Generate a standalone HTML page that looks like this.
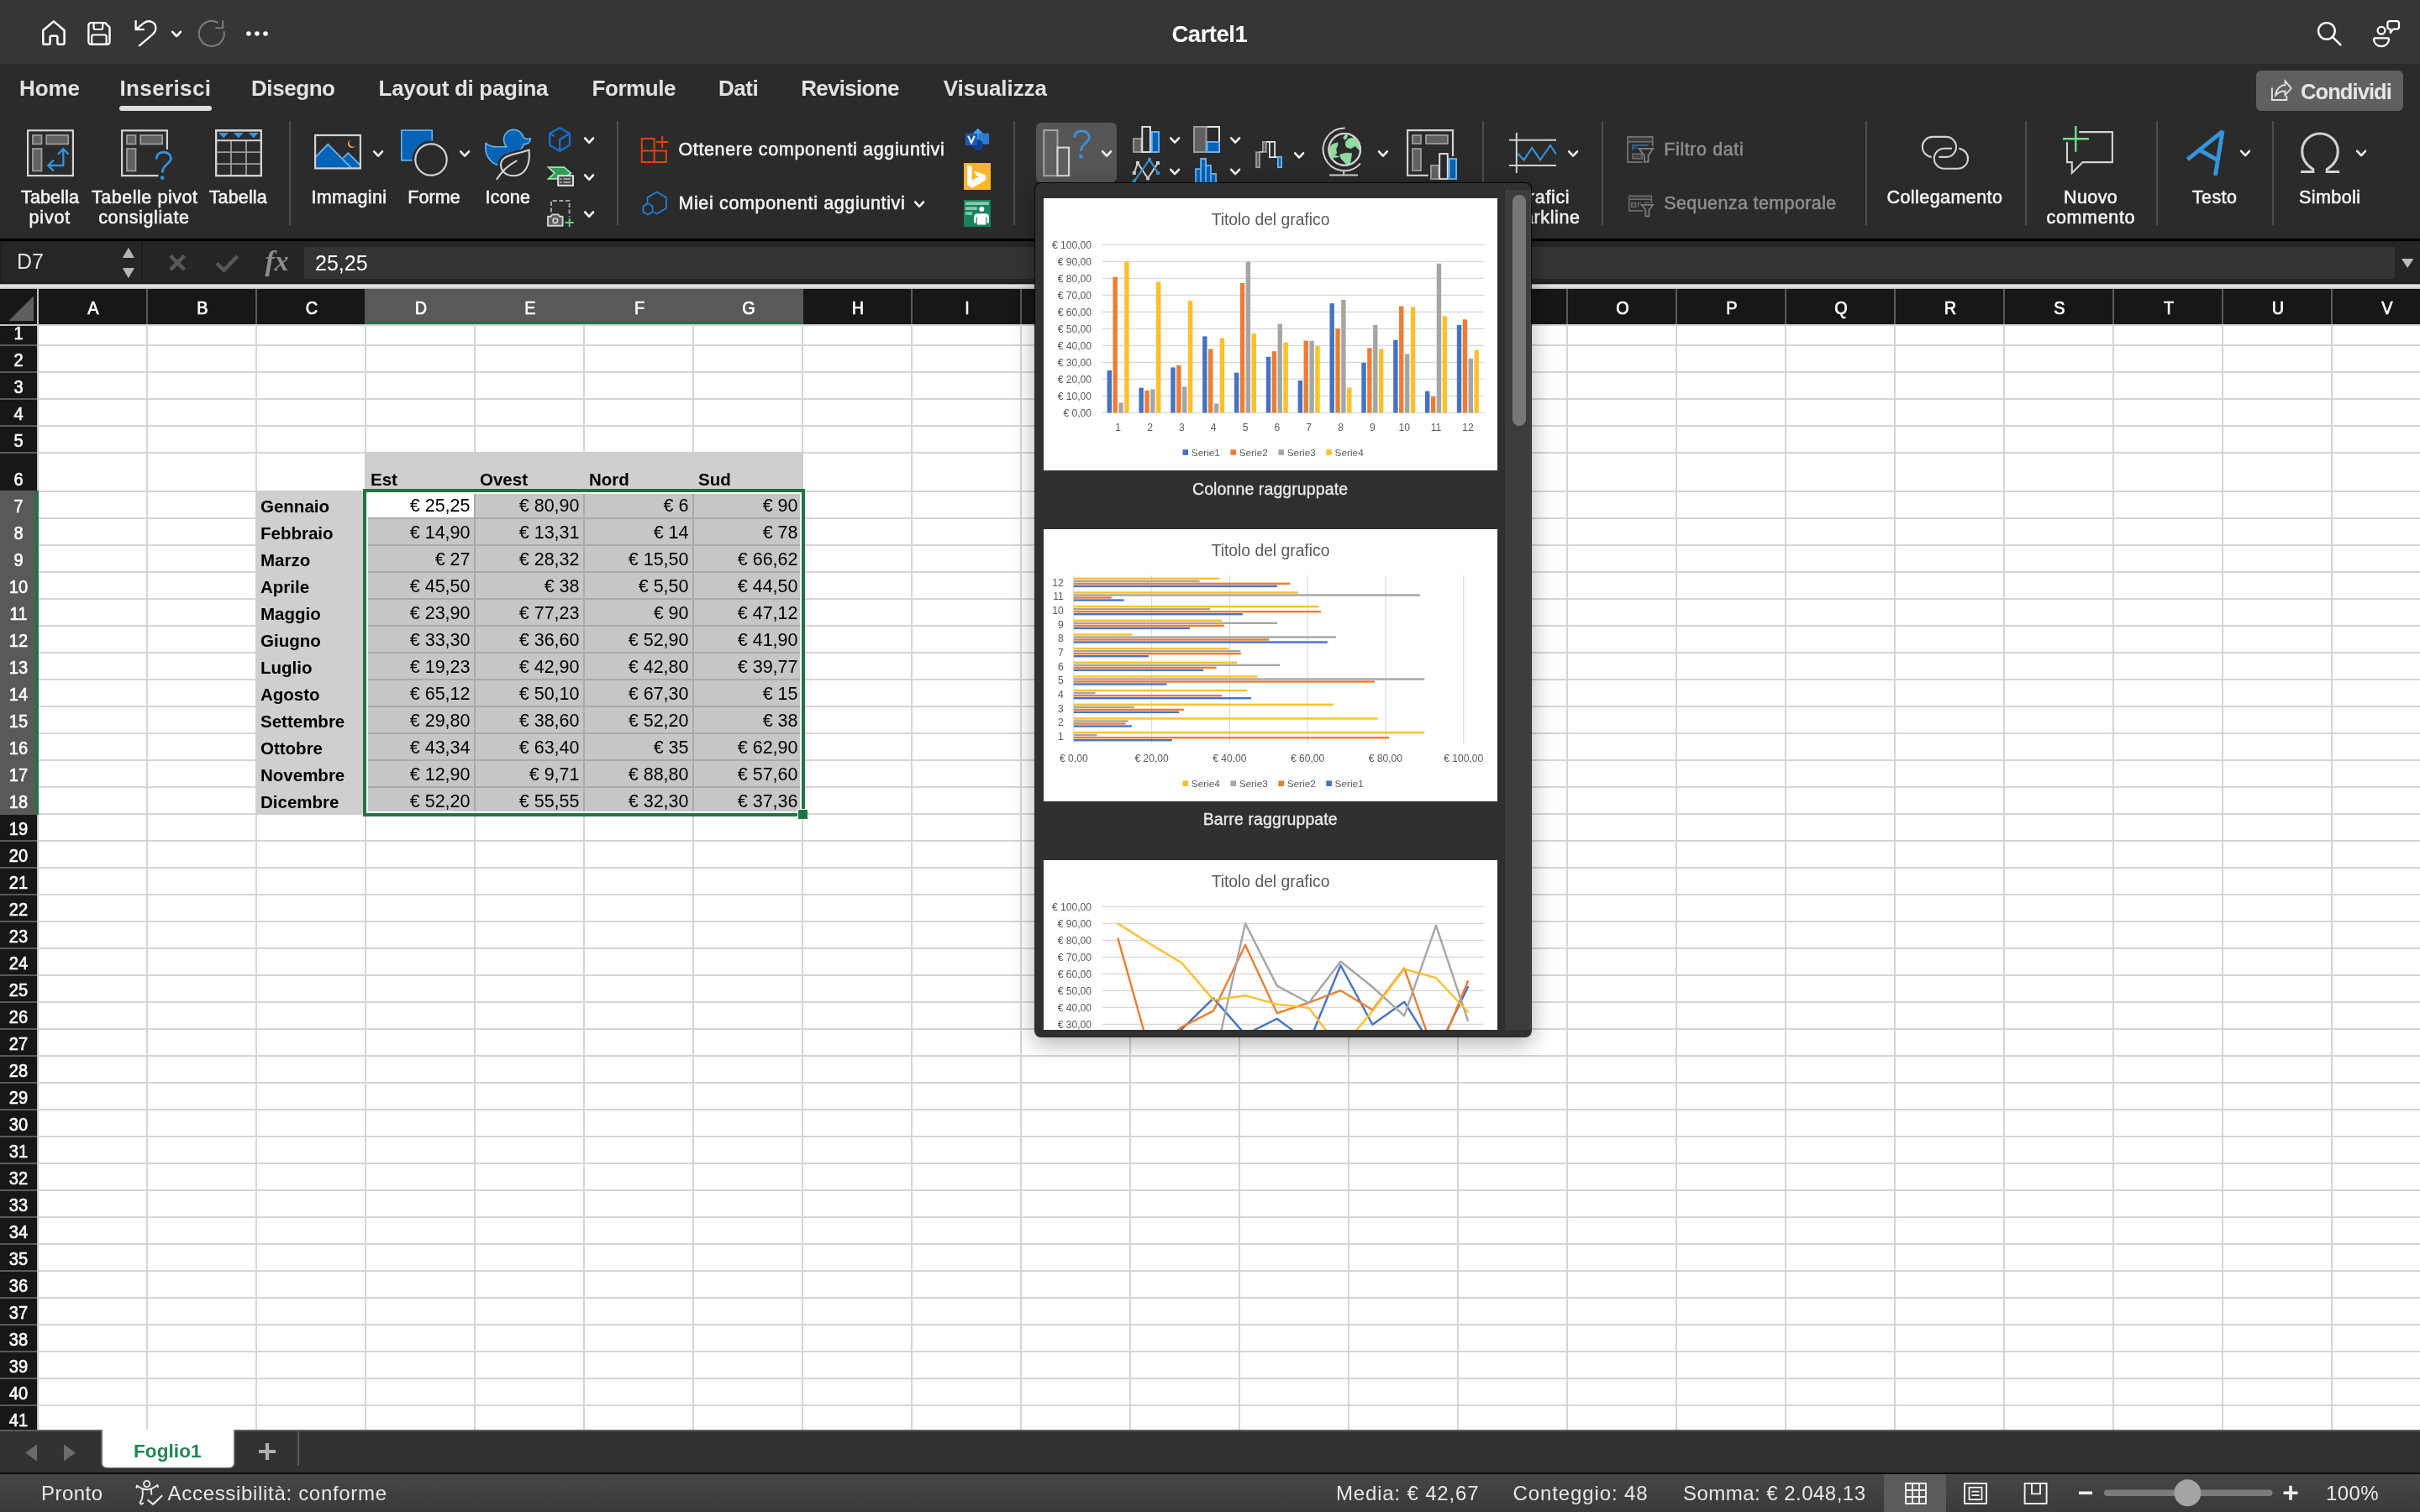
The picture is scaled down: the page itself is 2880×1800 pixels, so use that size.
<!DOCTYPE html>
<html><head><meta charset="utf-8"><title>Cartel1</title>
<style>
html,body{margin:0;padding:0;overflow:hidden;}
html{width:2880px;height:1800px;}
body{width:2880px;height:1800px;overflow:hidden;background:#fff;font-family:"Liberation Sans",sans-serif;position:relative;}
div{box-sizing:border-box;}
svg{position:absolute;overflow:visible;}
</style></head><body><div style="position:absolute;left:0;top:0;width:2880px;height:1800px;overflow:hidden;will-change:transform;">

<div style="position:absolute;left:0px;top:0px;width:2880px;height:76px;background:#363636;"></div>
<div style="position:absolute;left:0px;top:76px;width:2880px;height:208px;background:#2b2b2b;"></div>
<div style="position:absolute;left:0px;top:284px;width:2880px;height:3px;background:#000;"></div>
<div style="position:absolute;left:0px;top:287px;width:2880px;height:51px;background:#1e1e1e;"></div>
<div style="position:absolute;left:0px;top:338px;width:2880px;height:6px;background:linear-gradient(#8c8c8c 0,#ececec 30%,#e4e4e4 55%,#b4b4b4 100%);"></div>
<svg style="left:0;top:0" width="2880" height="76" viewBox="0 0 2880 76"><path d="M51.2 36.3 L63.9 25.4 L76.6 36.3 V51.4 a1.4 1.4 0 0 1 -1.4 1.4 h-5.6 a1.2 1.2 0 0 1 -1.2 -1.2 V44.6 a1.8 1.8 0 0 0 -1.8 -1.8 h-5.2 a1.8 1.8 0 0 0 -1.8 1.8 V51.6 a1.2 1.2 0 0 1 -1.2 1.2 h-5.6 a1.4 1.4 0 0 1 -1.4 -1.4 Z" fill="none" stroke="#fff" stroke-width="2.5" stroke-linejoin="round"/><path d="M108.4 27.1 H125 L130.5 32.6 V49.8 a3 3 0 0 1 -3 3 H108.4 a3 3 0 0 1 -3 -3 V30.1 a3 3 0 0 1 3 -3 Z" fill="none" stroke="#fff" stroke-width="2.4" stroke-linejoin="round"/><path d="M111.5 27.1 V33 a2 2 0 0 0 2 2 h6.7 a2 2 0 0 0 2 -2 V27.1" fill="none" stroke="#fff" stroke-width="2.2"/><path d="M109.2 52.8 V43.5 a2 2 0 0 1 2 -2 h13.4 a2 2 0 0 1 2 2 V52.8" fill="none" stroke="#fff" stroke-width="2.2"/><path d="M161.6 24.3 V35.2 H171.8" fill="none" stroke="#fff" stroke-width="2.3"/><path d="M162 34.8 L171.5 27.2 C177.5 22.8 185.3 26.5 185.3 33.5 C185.3 36.8 183.8 39.2 181.2 41.3 L165.3 54.8" fill="none" stroke="#fff" stroke-width="2.3" stroke-linejoin="round"/><polyline points="205.2,37.8 210.1,43.099999999999994 215,37.8" fill="none" stroke="#fff" stroke-width="2.6" stroke-linecap="round" stroke-linejoin="round"/><path d="M266.6 37.5 A15 15 0 1 1 259.5 27.1" fill="none" stroke="#7b7b7b" stroke-width="2.1"/><path d="M265.2 24.3 V33.2 H256.3" fill="none" stroke="#7b7b7b" stroke-width="2.1"/><circle cx="295.9" cy="40" r="2.8" fill="#fff"/><circle cx="305.9" cy="40" r="2.8" fill="#fff"/><circle cx="316" cy="40" r="2.8" fill="#fff"/><circle cx="2768.9" cy="36.9" r="9.8" fill="none" stroke="#fff" stroke-width="2.4"/><path d="M2776.3 44.3 L2785.5 53.4" stroke="#fff" stroke-width="2.4" stroke-linecap="round"/><circle cx="2834" cy="36.3" r="4.4" fill="none" stroke="#fff" stroke-width="2.3"/><path d="M2826.5 45.3 H2841.5 a1.5 1.5 0 0 1 1.5 1.5 A9 8.4 0 0 1 2825 46.8 a1.5 1.5 0 0 1 1.5 -1.5 Z" fill="none" stroke="#fff" stroke-width="2.3"/><path d="M2844 25.1 H2852.4 a2.6 2.6 0 0 1 2.6 2.6 V32 a2.6 2.6 0 0 1 -2.6 2.6 H2848.2 L2844.8 39 V34.6 H2844 a2.6 2.6 0 0 1 -2.6 -2.6 V27.7 a2.6 2.6 0 0 1 2.6 -2.6 Z" fill="none" stroke="#fff" stroke-width="2.2" stroke-linejoin="round"/></svg>
<div style="position:absolute;top:22.87px;height:36px;line-height:36px;font-size:27.5px;color:#fff;white-space:nowrap;font-weight:bold;left:1394.5px;letter-spacing:-0.507px;">Cartel1</div>
<div style="position:absolute;top:87.99px;height:34px;line-height:34px;font-size:26px;color:#e2e2e2;white-space:nowrap;font-weight:bold;left:23px;letter-spacing:-0.079px;">Home</div>
<div style="position:absolute;top:87.99px;height:34px;line-height:34px;font-size:26px;color:#e2e2e2;white-space:nowrap;font-weight:bold;left:142.5px;letter-spacing:0.374px;">Inserisci</div>
<div style="position:absolute;top:87.99px;height:34px;line-height:34px;font-size:26px;color:#e2e2e2;white-space:nowrap;font-weight:bold;left:299px;letter-spacing:-0.428px;">Disegno</div>
<div style="position:absolute;top:87.99px;height:34px;line-height:34px;font-size:26px;color:#e2e2e2;white-space:nowrap;font-weight:bold;left:450.6px;letter-spacing:-0.305px;">Layout di pagina</div>
<div style="position:absolute;top:87.99px;height:34px;line-height:34px;font-size:26px;color:#e2e2e2;white-space:nowrap;font-weight:bold;left:704.5px;letter-spacing:-0.428px;">Formule</div>
<div style="position:absolute;top:87.99px;height:34px;line-height:34px;font-size:26px;color:#e2e2e2;white-space:nowrap;font-weight:bold;left:855px;letter-spacing:-0.473px;">Dati</div>
<div style="position:absolute;top:87.99px;height:34px;line-height:34px;font-size:26px;color:#e2e2e2;white-space:nowrap;font-weight:bold;left:953.2px;letter-spacing:-0.704px;">Revisione</div>
<div style="position:absolute;top:87.99px;height:34px;line-height:34px;font-size:26px;color:#e2e2e2;white-space:nowrap;font-weight:bold;left:1122.8px;letter-spacing:-0.067px;">Visualizza</div>
<div style="position:absolute;left:142px;top:126px;width:110px;height:6px;background:#dedede;border-radius:3px;"></div>
<div style="position:absolute;left:2685px;top:84px;width:175px;height:48px;background:#606060;border-radius:6px;"></div>
<div style="position:absolute;top:92.66px;height:33px;line-height:33px;font-size:25.5px;color:#e6e6e6;white-space:nowrap;font-weight:bold;left:2738px;letter-spacing:-0.920px;">Condividi</div>
<svg style="left:0;top:0" width="2880" height="284" viewBox="0 0 2880 284"><path d="M2703.9 104.6 V119 H2721.3 V114.2" fill="none" stroke="#e2e2e2" stroke-width="1.9"/><path d="M2708.2 113.3 C2708.6 106.4 2713.4 101.6 2719.5 101.2 V96.4 L2726.8 105.1 L2719.5 113.3 V108.5 C2714.3 108.5 2710.8 110.3 2708.2 113.3 Z" fill="none" stroke="#e2e2e2" stroke-width="1.8" stroke-linejoin="miter"/><rect x="33.1" y="155.3" width="53.8" height="53.8" fill="none" stroke="#d2d2d2" stroke-width="2.2"/><rect x="39" y="161" width="10.5" height="10.5" fill="#616161" stroke="#9c9c9c" stroke-width="1.8"/><rect x="55.2" y="161" width="26" height="10.5" fill="#616161" stroke="#9c9c9c" stroke-width="1.8"/><rect x="39" y="177" width="10.5" height="26.5" fill="#616161" stroke="#9c9c9c" stroke-width="1.8"/><path d="M75.3 197 V177.6 M68.9 183.8 L75.3 177.2 L81.7 183.8 M76.4 197 H57.4 M63.8 190.6 L57.2 197 L63.8 203.4" fill="none" stroke="#3595de" stroke-width="2.3"/><path d="M188.5 209.1 H145.1 V155.3 H198.9 V178" fill="none" stroke="#d2d2d2" stroke-width="2.2"/><rect x="151" y="161" width="10.5" height="10.5" fill="#616161" stroke="#9c9c9c" stroke-width="1.8"/><rect x="167.2" y="161" width="26" height="10.5" fill="#616161" stroke="#9c9c9c" stroke-width="1.8"/><rect x="151" y="177" width="10.5" height="26.5" fill="#616161" stroke="#9c9c9c" stroke-width="1.8"/><path d="M186.2 189.5 C186.2 184 190 181.2 194.8 181.2 C199.8 181.2 203.4 184.3 203.4 188.6 C203.4 195 193.2 196.2 193.2 205.5" fill="none" stroke="#3595de" stroke-width="2.7"/><rect x="191.2" y="209.6" width="4.1" height="4.1" fill="#3595de"/><rect x="257.1" y="155.3" width="53.8" height="53.8" fill="none" stroke="#d2d2d2" stroke-width="2.2"/><path d="M257 181.2 H311 M257 195.2 H311 M275 167.2 V209 M293 167.2 V209" stroke="#9c9c9c" stroke-width="1.8" fill="none"/><path d="M257 167.2 H311" stroke="#d2d2d2" stroke-width="2" fill="none"/><path d="M259.9 157.9 H272.1 L266 164.3 Z" fill="#3595de"/><path d="M277.79999999999995 157.9 H290.0 L283.9 164.3 Z" fill="#3595de"/><path d="M295.7 157.9 H307.90000000000003 L301.8 164.3 Z" fill="#3595de"/><rect x="257.1" y="155.3" width="53.8" height="53.8" fill="none" stroke="#d2d2d2" stroke-width="2.2"/><path d="M375.5 186.6 L390.3 171.6 L408.6 190 L414.3 181.9 L428.5 196 V200.3 H375.5 Z" fill="#0763b6"/><path d="M375.5 186.8 L390.3 171.8 L418.5 200.3 M408.3 188.2 L414.3 182.2 L428.8 196.7" fill="none" stroke="#6ab4f0" stroke-width="1.8"/><path d="M417.2 166.4 A5 5 0 1 0 423.2 173.6 A4.6 4.6 0 0 1 417.2 166.4 Z" fill="#f2a85b"/><rect x="375.1" y="161" width="53.8" height="39.4" fill="none" stroke="#d2d2d2" stroke-width="2.2"/><polyline points="445.2,180.3 450.1,185.60000000000002 455,180.3" fill="none" stroke="#f0f0f0" stroke-width="2.6" stroke-linecap="round" stroke-linejoin="round"/><rect x="477.8" y="155.1" width="36.4" height="35.8" fill="#0763b6" stroke="#6ab4f0" stroke-width="1.6"/><circle cx="513" cy="190" r="22.5" fill="#2b2b2b"/><circle cx="513" cy="190" r="18.7" fill="none" stroke="#d2d2d2" stroke-width="2.2"/><polyline points="548.2,180.3 553.1,185.60000000000002 558,180.3" fill="none" stroke="#f0f0f0" stroke-width="2.6" stroke-linecap="round" stroke-linejoin="round"/><path d="M578 170.3 C582 174 587 174.8 592 174.8 H603 C600.5 172.3 599.6 169 599.6 166 C599.6 159.6 604.7 154.4 611.3 154.4 C617 154.4 621.8 158.3 622.8 163.6 C625.5 165.6 629 165.8 631.5 164.6 C631.5 169.5 627.5 171.8 623.3 171.6 C623 173 622.2 175 620.5 176.8 L600 196.8 C587 198.5 576 188 578 170.3 Z" fill="#0763b6" stroke="#6ab4f0" stroke-width="1.6" stroke-linejoin="round"/><path d="M629.6 178.6 C631.5 196 625 209.2 611 209.2 C602 209.2 596 203.5 596 196 C596 184.5 612 184.5 629.6 178.6 Z" fill="#2b2b2b" stroke="#2b2b2b" stroke-width="7" stroke-linejoin="round"/><path d="M629.6 178.6 C631.5 196 625 209.2 611 209.2 C602 209.2 596 203.5 596 196 C596 184.5 612 184.5 629.6 178.6 Z" fill="none" stroke="#d2d2d2" stroke-width="2.1" stroke-linejoin="round"/><path d="M591.3 213.2 C597 204.5 604 197 614.5 191.6" fill="none" stroke="#d2d2d2" stroke-width="2.1" stroke-linecap="round"/><path d="M666.2 152.2 L678 159 V172.8 L666.2 179.8 L654.2 172.8 V159 Z M666.2 179.8 V166 L678 159 M654.2 159 L659.5 162" fill="none" stroke="#1272cf" stroke-width="2.3" stroke-linejoin="round"/><polyline points="696.2,164.5 701.1,169.8 706,164.5" fill="none" stroke="#f0f0f0" stroke-width="2.6" stroke-linecap="round" stroke-linejoin="round"/><path d="M652.6 199.2 H671.4 L679.4 206 L671.4 212.9 H652.6 L660 206 Z" fill="#2f9e50" stroke="#a2e2b2" stroke-width="1.7" stroke-linejoin="miter"/><rect x="664.2" y="209.2" width="17.8" height="11.6" fill="#444" stroke="#e0e0e0" stroke-width="2"/><path d="M670.5 213 H679 M670.5 217 H679" stroke="#bdbdbd" stroke-width="1.6"/><rect x="666.6" y="212.2" width="1.8" height="1.8" fill="#bdbdbd"/><rect x="666.6" y="216.2" width="1.8" height="1.8" fill="#bdbdbd"/><polyline points="696.2,208.5 701.1,213.8 706,208.5" fill="none" stroke="#f0f0f0" stroke-width="2.6" stroke-linecap="round" stroke-linejoin="round"/><path d="M656 252.5 V239 H677.6 V258" fill="none" stroke="#a4a4a4" stroke-width="2" stroke-dasharray="5 2.6"/><path d="M652 257.8 H655.6 L657 255.4 H664.6 L666 257.8 H669.6 V268.7 H652 Z" fill="#5c5c5c" stroke="#d2d2d2" stroke-width="1.9" stroke-linejoin="round"/><circle cx="660.8" cy="262.8" r="2.8" fill="none" stroke="#d2d2d2" stroke-width="1.7"/><path d="M677.7 260 V270 M672.7 265 H682.7" stroke="#5fd67b" stroke-width="1.9"/><polyline points="696.2,252.5 701.1,257.8 706,252.5" fill="none" stroke="#f0f0f0" stroke-width="2.6" stroke-linecap="round" stroke-linejoin="round"/><path d="M763.8 164.9 H778.6 V193 H763.8 Z M763.8 179.5 H792.8 V193 H778.6" fill="none" stroke="#e2430d" stroke-width="2"/><path d="M788.2 161.8 V176 M781 169 H795.2" stroke="#e2430d" stroke-width="2"/><path d="M770.5 243 V235 L781.7 228.6 L792.8 235 V248 L781.7 254.4 L778.2 252.4" fill="none" stroke="#1f83dc" stroke-width="1.7" stroke-linejoin="round"/><path d="M771 242.3 L776.6 245.6 V252.2 L771 255.5 L765.4 252.2 V245.6 Z" fill="none" stroke="#1f83dc" stroke-width="1.7" stroke-linejoin="round"/><polyline points="1089.2,240.5 1094.1,245.8 1099,240.5" fill="none" stroke="#f0f0f0" stroke-width="2.6" stroke-linecap="round" stroke-linejoin="round"/><path d="M1163.8 152.8 L1171 160 L1163.8 167.2 L1156.6 160 Z" fill="#41a5ee"/><rect x="1164.6" y="158.8" width="12.5" height="12.9" fill="#2b7cd3"/><circle cx="1163.6" cy="172.5" r="6.4" fill="#103f91"/><rect x="1148.9" y="158.9" width="14.2" height="14.1" fill="#185abd"/><path d="M1152.2 161.8 L1156 170 L1159.8 161.8" fill="none" stroke="#fff" stroke-width="2"/><rect x="1147" y="194" width="32" height="32" fill="#fdb52b"/><path d="M1151 196.2 L1156.6 198.2 V214.8 L1165 210.2 L1161.4 208.4 L1159.4 203.4 L1173 208.2 V214.6 L1157 223.7 L1151 220.3 Z" fill="#fff"/><rect x="1147" y="238" width="32" height="32" fill="#15845a"/><path d="M1148.9 242.1 H1176.9 M1148.9 248.1 H1162.7 M1148.9 254 H1157.1" stroke="#8cc7a8" stroke-width="3.6"/><circle cx="1168.3" cy="248.9" r="3" fill="#fff"/><path d="M1159.2 258.2 a4 4 0 0 1 4 -4 h9.7 a4 4 0 0 1 4 4 V265.5 h-2.4 v-7 h-1.2 V267.5 h-10.5 V258.5 h-1.2 V265.5 h-2.4 Z" fill="#fff"/><rect x="1233" y="146" width="96" height="71" rx="6" fill="#565656"/><rect x="1242.3" y="155.1" width="16.2" height="54.1" fill="#5f5f5f" stroke="#a8a8a8" stroke-width="2"/><rect x="1258.5" y="175.6" width="13.6" height="33.6" fill="#5f5f5f" stroke="#dcdcdc" stroke-width="2"/><path d="M1278.8 164 C1278.8 158.6 1282.8 155.8 1287.5 155.8 C1292.6 155.8 1296.4 158.9 1296.4 163.4 C1296.4 169.8 1286.2 171 1286.2 180" fill="none" stroke="#3595de" stroke-width="2.7"/><rect x="1284.2" y="184" width="4.1" height="4.1" fill="#3595de"/><polyline points="1312.2,180.3 1317.1,185.60000000000002 1322,180.3" fill="none" stroke="#f0f0f0" stroke-width="2.6" stroke-linecap="round" stroke-linejoin="round"/><rect x="1349" y="165.1" width="9.3" height="15.9" fill="#616161" stroke="#9c9c9c" stroke-width="1.9"/><rect x="1359.3" y="151" width="9.6" height="30" fill="#2b2b2b" stroke="#e4e4e4" stroke-width="1.9"/><rect x="1370.8" y="157" width="8.3" height="24" fill="#0763b6" stroke="#6ab4f0" stroke-width="1.9"/><polyline points="1393.2,164.3 1398.1,169.60000000000002 1403,164.3" fill="none" stroke="#f0f0f0" stroke-width="2.6" stroke-linecap="round" stroke-linejoin="round"/><path d="M1349.8 206 L1354 194 L1366 212.4 L1378 194" fill="none" stroke="#d2d2d2" stroke-width="2"/><rect x="1347.8" y="204" width="4" height="4" fill="#d2d2d2"/><rect x="1352" y="192" width="4" height="4" fill="#d2d2d2"/><rect x="1364" y="210.4" width="4" height="4" fill="#d2d2d2"/><rect x="1376" y="192" width="4" height="4" fill="#d2d2d2"/><path d="M1349.8 215.8 L1368 190 L1378 206" fill="none" stroke="#3595de" stroke-width="2"/><rect x="1347.8" y="213.6" width="4" height="4" fill="#3595de"/><rect x="1366" y="188" width="4" height="4" fill="#3595de"/><rect x="1376" y="204" width="4" height="4" fill="#3595de"/><polyline points="1393.2,201.8 1398.1,207.10000000000002 1403,201.8" fill="none" stroke="#f0f0f0" stroke-width="2.6" stroke-linecap="round" stroke-linejoin="round"/><rect x="1421" y="151" width="30" height="30" fill="#2b2b2b" stroke="#e4e4e4" stroke-width="2"/><rect x="1421" y="151" width="14.5" height="30" fill="#616161" stroke="#9c9c9c" stroke-width="2"/><rect x="1436.5" y="169" width="14.5" height="12" fill="#0763b6" stroke="#6ab4f0" stroke-width="1.9"/><polyline points="1465.2,164.3 1470.1,169.60000000000002 1475,164.3" fill="none" stroke="#f0f0f0" stroke-width="2.6" stroke-linecap="round" stroke-linejoin="round"/><path d="M1423.1 218 V201.1 H1429.1 V189 H1435.1 V196.9 H1441 V206.9 H1447.1 V218 Z" fill="#0763b6"/><path d="M1423.1 218 V201.1 H1429.1 M1429.1 218 V189 H1435.1 V218 M1435.1 196.9 H1441 V218 M1441 206.9 H1447.1 V218" fill="none" stroke="#6ab4f0" stroke-width="1.8"/><polyline points="1465.2,201.8 1470.1,207.10000000000002 1475,201.8" fill="none" stroke="#f0f0f0" stroke-width="2.6" stroke-linecap="round" stroke-linejoin="round"/><rect x="1495" y="181.2" width="4" height="18" fill="#616161" stroke="#9c9c9c" stroke-width="1.8"/><rect x="1502.9" y="168.9" width="4" height="12" fill="#616161" stroke="#9c9c9c" stroke-width="1.8"/><path d="M1499 180.9 H1503" stroke="#d2d2d2" stroke-width="1.6"/><rect x="1510.9" y="168.9" width="6.2" height="18.3" fill="#2b2b2b" stroke="#e4e4e4" stroke-width="1.8"/><path d="M1507 168.9 H1511 M1517 187.2 H1521" stroke="#e4e4e4" stroke-width="1.8"/><rect x="1520.9" y="186.8" width="4.2" height="12.4" fill="#0763b6" stroke="#6ab4f0" stroke-width="1.8"/><polyline points="1541.2,182.3 1546.1,187.60000000000002 1551,182.3" fill="none" stroke="#f0f0f0" stroke-width="2.6" stroke-linecap="round" stroke-linejoin="round"/><circle cx="1600.2" cy="177.9" r="18.8" fill="#2b2b2b" stroke="#d2d2d2" stroke-width="2"/><path d="M1582.3 175.2 L1585.8 171.7 L1591.7 169.8 L1592.2 171.7 L1589.8 177.7 L1590.7 182.6 L1587.8 184.6 L1593.7 186.6 L1585.8 188.1 L1582.8 183.6 Z M1598.7 163.8 L1601.7 159.8 L1603.6 161.3 L1602.6 164.8 L1600.2 166.3 Z M1601.7 168.8 L1604.6 165.3 L1611.6 163.8 L1616.5 168.8 L1618.7 174.7 L1618.3 179.2 L1612.6 173.7 L1607.6 176.7 L1602.6 175.2 L1601.2 171.7 Z M1594.7 184.1 L1601.7 182.2 L1608.6 182.6 L1607.6 189.6 L1606.6 195 L1602.6 196 L1599.7 192.6 L1595.7 188.6 Z" fill="#8fdba0" stroke="#8fdba0" stroke-width="0.8" stroke-linejoin="round"/><circle cx="1600.2" cy="177.9" r="18.8" fill="none" stroke="#d2d2d2" stroke-width="2"/><path d="M1600.6 152.6 A25.3 25.3 0 1 0 1619 194.6" fill="none" stroke="#d2d2d2" stroke-width="2" /><path d="M1599.2 203.2 V208.4 M1582 208.4 H1616" stroke="#d2d2d2" stroke-width="2"/><polyline points="1641.0,180.3 1645.8999999999999,185.60000000000002 1650.8,180.3" fill="none" stroke="#f0f0f0" stroke-width="2.6" stroke-linecap="round" stroke-linejoin="round"/><path d="M1699.8 208.8 H1675.1 V155.2 H1729 V186.1" fill="none" stroke="#d2d2d2" stroke-width="2.2"/><rect x="1681" y="161" width="10" height="10" fill="#616161" stroke="#9c9c9c" stroke-width="1.8"/><rect x="1697" y="161" width="25.9" height="10" fill="#616161" stroke="#9c9c9c" stroke-width="1.8"/><rect x="1681" y="177.1" width="10" height="26" fill="#616161" stroke="#9c9c9c" stroke-width="1.8"/><rect x="1703" y="197" width="9.2" height="16" fill="#616161" stroke="#9c9c9c" stroke-width="1.9"/><rect x="1713.2" y="183.1" width="9.6" height="29.9" fill="#2b2b2b" stroke="#e4e4e4" stroke-width="1.9"/><rect x="1724.7" y="189.1" width="8.4" height="23.9" fill="#0763b6" stroke="#6ab4f0" stroke-width="1.9"/><path d="M1804.8 158 V206 M1796 166.8 H1852 M1796 197 H1852" stroke="#d2d2d2" stroke-width="2" fill="none"/><path d="M1806 182.5 L1813.5 190.5 L1823.2 175.8 L1833 190.5 L1845 173 L1852 183.5" fill="none" stroke="#3595de" stroke-width="2.1"/><polyline points="1867.2,180.3 1872.1,185.60000000000002 1877,180.3" fill="none" stroke="#f0f0f0" stroke-width="2.6" stroke-linecap="round" stroke-linejoin="round"/><path d="M1954.5 192.9 H1937.2 V163.1 H1966.7 V174" fill="none" stroke="#6e6e6e" stroke-width="2"/><rect x="1938.2" y="164.4" width="27.5" height="3.4" fill="#3e3e3e"/><path d="M1937.2 168.8 H1966.7" stroke="#6e6e6e" stroke-width="1.8"/><path d="M1943.1 178.6 V172.9 H1961.8" fill="none" stroke="#3d6b99" stroke-width="1.7"/><rect x="1944" y="173.8" width="4.6" height="4" fill="#1f4a72"/><rect x="1943.1" y="183.2" width="11" height="5.6" fill="#414141" stroke="#6e6e6e" stroke-width="1.6"/><path d="M1950.4 177 H1967.2 L1961.6 185 V192.8 H1957 V185 Z" fill="#2b2b2b" stroke="#7c7c7c" stroke-width="1.9" stroke-linejoin="miter"/><path d="M1955 250.9 H1938.9 V233.4 H1965.3 V242" fill="none" stroke="#6e6e6e" stroke-width="1.6"/><rect x="1939.7" y="234.4" width="24.8" height="2.2" fill="#3e3e3e"/><path d="M1938.9 237.4 H1965.3" stroke="#6e6e6e" stroke-width="1.5"/><rect x="1941.5" y="241.6" width="5.2" height="5" fill="#444" stroke="#6e6e6e" stroke-width="1.3"/><path d="M1949.6 246.6 V241.6 H1953.2 M1957 241.2 H1963" fill="none" stroke="#6e6e6e" stroke-width="1.3"/><path d="M1953.6 243.8 H1967.2 L1962.4 249.8 V257.4 H1958.4 V249.8 Z" fill="#2b2b2b" stroke="#7c7c7c" stroke-width="1.7" stroke-linejoin="miter"/><path d="M2298.75 186.85 A12 12 0 0 1 2299.8 162.9 H2316 A12 12 0 0 1 2316 186.9 H2307.4" fill="none" stroke="#d2d2d2" stroke-width="2.1"/><path d="M2323 176.8 H2313.8 A12 12 0 0 0 2313.8 200.8 H2330 A12 12 0 0 0 2331.3 176.87" fill="none" stroke="#d2d2d2" stroke-width="2.1"/><path d="M2474.2 157.1 H2513.9 V193.1 H2478.6 L2465.8 206 V193.1 H2460 V169.2" fill="none" stroke="#d2d2d2" stroke-width="2.1"/><path d="M2470.3 150 V180.7 M2454.9 165.3 H2485.9" stroke="#6fe28b" stroke-width="2.4"/><path d="M2603.4 189.8 L2645 156.4 L2636.4 208.8 M2618.5 179 L2637.8 189.8" fill="none" stroke="#3595de" stroke-width="4.9" stroke-linejoin="bevel"/><polyline points="2667.2,179.8 2672.1,185.10000000000002 2677,179.8" fill="none" stroke="#f0f0f0" stroke-width="2.6" stroke-linecap="round" stroke-linejoin="round"/><path d="M2738 204.4 H2752.8 V201.6 C2744.2 196 2739.7 188.6 2739.7 180.2 A21.3 21.3 0 0 1 2782.3 180.2 C2782.3 188.6 2777.8 196 2769.2 201.6 V204.4 H2784.1" fill="none" stroke="#d2d2d2" stroke-width="3"/><polyline points="2805.2,179.8 2810.1,185.10000000000002 2815,179.8" fill="none" stroke="#f0f0f0" stroke-width="2.6" stroke-linecap="round" stroke-linejoin="round"/></svg>
<div style="position:absolute;top:220.55px;height:28px;line-height:28px;font-size:21.5px;color:#f4f4f4;white-space:nowrap;-webkit-text-stroke:0.55px #f4f4f4;left:25px;letter-spacing:0.144px;">Tabella</div>
<div style="position:absolute;top:244.55px;height:28px;line-height:28px;font-size:21.5px;color:#f4f4f4;white-space:nowrap;-webkit-text-stroke:0.55px #f4f4f4;left:34.5px;letter-spacing:0.846px;">pivot</div>
<div style="position:absolute;top:220.55px;height:28px;line-height:28px;font-size:21.5px;color:#f4f4f4;white-space:nowrap;-webkit-text-stroke:0.55px #f4f4f4;left:108.9px;letter-spacing:0.548px;">Tabelle pivot</div>
<div style="position:absolute;top:244.55px;height:28px;line-height:28px;font-size:21.5px;color:#f4f4f4;white-space:nowrap;-webkit-text-stroke:0.55px #f4f4f4;left:117.2px;letter-spacing:0.621px;">consigliate</div>
<div style="position:absolute;top:220.55px;height:28px;line-height:28px;font-size:21.5px;color:#f4f4f4;white-space:nowrap;-webkit-text-stroke:0.55px #f4f4f4;left:248.7px;letter-spacing:0.144px;">Tabella</div>
<div style="position:absolute;top:220.55px;height:28px;line-height:28px;font-size:21.5px;color:#f4f4f4;white-space:nowrap;-webkit-text-stroke:0.55px #f4f4f4;left:370.5px;letter-spacing:0.326px;">Immagini</div>
<div style="position:absolute;top:220.55px;height:28px;line-height:28px;font-size:21.5px;color:#f4f4f4;white-space:nowrap;-webkit-text-stroke:0.55px #f4f4f4;left:485.2px;letter-spacing:0.070px;">Forme</div>
<div style="position:absolute;top:220.55px;height:28px;line-height:28px;font-size:21.5px;color:#f4f4f4;white-space:nowrap;-webkit-text-stroke:0.55px #f4f4f4;left:577.5px;letter-spacing:0.226px;">Icone</div>
<div style="position:absolute;top:164.05px;height:28px;line-height:28px;font-size:21.5px;color:#f4f4f4;white-space:nowrap;-webkit-text-stroke:0.55px #f4f4f4;left:807.4px;letter-spacing:0.648px;">Ottenere componenti aggiuntivi</div>
<div style="position:absolute;top:228.05px;height:28px;line-height:28px;font-size:21.5px;color:#f4f4f4;white-space:nowrap;-webkit-text-stroke:0.55px #f4f4f4;left:807.4px;letter-spacing:0.641px;">Miei componenti aggiuntivi</div>
<div style="position:absolute;top:220.55px;height:28px;line-height:28px;font-size:21.5px;color:#f4f4f4;white-space:nowrap;-webkit-text-stroke:0.55px #f4f4f4;left:1801.6px;letter-spacing:0.647px;">Grafici</div>
<div style="position:absolute;top:244.55px;height:28px;line-height:28px;font-size:21.5px;color:#f4f4f4;white-space:nowrap;-webkit-text-stroke:0.55px #f4f4f4;left:1789px;letter-spacing:0.619px;">sparkline</div>
<div style="position:absolute;top:164.05px;height:28px;line-height:28px;font-size:21.5px;color:#8e8e8e;white-space:nowrap;-webkit-text-stroke:0.55px #8e8e8e;left:1980.3px;letter-spacing:0.598px;">Filtro dati</div>
<div style="position:absolute;top:228.05px;height:28px;line-height:28px;font-size:21.5px;color:#8e8e8e;white-space:nowrap;-webkit-text-stroke:0.55px #8e8e8e;left:1980.3px;letter-spacing:0.387px;">Sequenza temporale</div>
<div style="position:absolute;top:220.55px;height:28px;line-height:28px;font-size:21.5px;color:#f4f4f4;white-space:nowrap;-webkit-text-stroke:0.55px #f4f4f4;left:2245.5px;letter-spacing:0.439px;">Collegamento</div>
<div style="position:absolute;top:220.55px;height:28px;line-height:28px;font-size:21.5px;color:#f4f4f4;white-space:nowrap;-webkit-text-stroke:0.55px #f4f4f4;left:2456px;letter-spacing:0.412px;">Nuovo</div>
<div style="position:absolute;top:244.55px;height:28px;line-height:28px;font-size:21.5px;color:#f4f4f4;white-space:nowrap;-webkit-text-stroke:0.55px #f4f4f4;left:2435.5px;letter-spacing:0.661px;">commento</div>
<div style="position:absolute;top:220.55px;height:28px;line-height:28px;font-size:21.5px;color:#f4f4f4;white-space:nowrap;-webkit-text-stroke:0.55px #f4f4f4;left:2608.8px;letter-spacing:0.453px;">Testo</div>
<div style="position:absolute;top:220.55px;height:28px;line-height:28px;font-size:21.5px;color:#f4f4f4;white-space:nowrap;-webkit-text-stroke:0.55px #f4f4f4;left:2736px;letter-spacing:0.417px;">Simboli</div>
<div style="position:absolute;left:344px;top:144px;width:2px;height:124px;background:#4d4d4d;"></div>
<div style="position:absolute;left:734px;top:144px;width:2px;height:124px;background:#4d4d4d;"></div>
<div style="position:absolute;left:1206px;top:144px;width:2px;height:124px;background:#4d4d4d;"></div>
<div style="position:absolute;left:1764px;top:144px;width:2px;height:124px;background:#4d4d4d;"></div>
<div style="position:absolute;left:1906px;top:144px;width:2px;height:124px;background:#4d4d4d;"></div>
<div style="position:absolute;left:2220px;top:144px;width:2px;height:124px;background:#4d4d4d;"></div>
<div style="position:absolute;left:2410px;top:144px;width:2px;height:124px;background:#4d4d4d;"></div>
<div style="position:absolute;left:2566px;top:144px;width:2px;height:124px;background:#4d4d4d;"></div>
<div style="position:absolute;left:2704px;top:144px;width:2px;height:124px;background:#4d4d4d;"></div>
<div style="position:absolute;left:2px;top:288px;width:166px;height:48px;background:#262626;"></div>
<div style="position:absolute;left:170px;top:288px;width:2710px;height:48px;background:#252525;"></div>
<div style="position:absolute;left:362px;top:294px;width:2488px;height:38px;background:#343434;border-radius:2px;"></div>
<div style="position:absolute;top:295.34px;height:32px;line-height:32px;font-size:25px;color:#e0e0e0;white-space:nowrap;left:20px;">D7</div>
<div style="position:absolute;top:297.14px;height:32px;line-height:32px;font-size:25px;color:#fff;white-space:nowrap;left:375px;">25,25</div>
<svg style="left:0;top:0" width="2880" height="344" viewBox="0 0 2880 344"><path d="M145.8 306.9 L152.9 294.8 L160 306.9 Z M145.8 319 L152.9 331.2 L160 319 Z" fill="#b6b6b6"/><path d="M202.8 304.4 L219.6 321.2 M219.6 304.4 L202.8 321.2" stroke="#585858" stroke-width="4.6"/><path d="M258 313.6 L266.6 321.6 L282.6 304.8" stroke="#585858" stroke-width="4.6" fill="none"/><text x="315.5" y="321.5" font-family="Liberation Serif, serif" font-style="italic" font-weight="bold" font-size="34" fill="#8e8e8e">fx</text><path d="M2858 308 H2872.4 L2865.2 319 Z" fill="#bdbdbd"/></svg>
<div style="position:absolute;left:44px;top:386px;width:2px;height:1316px;background:#d5d5d5;"></div>
<div style="position:absolute;left:174px;top:386px;width:2px;height:1316px;background:#d5d5d5;"></div>
<div style="position:absolute;left:304px;top:386px;width:2px;height:1316px;background:#d5d5d5;"></div>
<div style="position:absolute;left:434px;top:386px;width:2px;height:1316px;background:#d5d5d5;"></div>
<div style="position:absolute;left:564px;top:386px;width:2px;height:1316px;background:#d5d5d5;"></div>
<div style="position:absolute;left:694px;top:386px;width:2px;height:1316px;background:#d5d5d5;"></div>
<div style="position:absolute;left:824px;top:386px;width:2px;height:1316px;background:#d5d5d5;"></div>
<div style="position:absolute;left:954px;top:386px;width:2px;height:1316px;background:#d5d5d5;"></div>
<div style="position:absolute;left:1084px;top:386px;width:2px;height:1316px;background:#d5d5d5;"></div>
<div style="position:absolute;left:1214px;top:386px;width:2px;height:1316px;background:#d5d5d5;"></div>
<div style="position:absolute;left:1344px;top:386px;width:2px;height:1316px;background:#d5d5d5;"></div>
<div style="position:absolute;left:1474px;top:386px;width:2px;height:1316px;background:#d5d5d5;"></div>
<div style="position:absolute;left:1604px;top:386px;width:2px;height:1316px;background:#d5d5d5;"></div>
<div style="position:absolute;left:1734px;top:386px;width:2px;height:1316px;background:#d5d5d5;"></div>
<div style="position:absolute;left:1864px;top:386px;width:2px;height:1316px;background:#d5d5d5;"></div>
<div style="position:absolute;left:1994px;top:386px;width:2px;height:1316px;background:#d5d5d5;"></div>
<div style="position:absolute;left:2124px;top:386px;width:2px;height:1316px;background:#d5d5d5;"></div>
<div style="position:absolute;left:2254px;top:386px;width:2px;height:1316px;background:#d5d5d5;"></div>
<div style="position:absolute;left:2384px;top:386px;width:2px;height:1316px;background:#d5d5d5;"></div>
<div style="position:absolute;left:2514px;top:386px;width:2px;height:1316px;background:#d5d5d5;"></div>
<div style="position:absolute;left:2644px;top:386px;width:2px;height:1316px;background:#d5d5d5;"></div>
<div style="position:absolute;left:2774px;top:386px;width:2px;height:1316px;background:#d5d5d5;"></div>
<div style="position:absolute;left:2904px;top:386px;width:2px;height:1316px;background:#d5d5d5;"></div>
<div style="position:absolute;left:46px;top:410px;width:2834px;height:2px;background:#d5d5d5;"></div>
<div style="position:absolute;left:46px;top:442px;width:2834px;height:2px;background:#d5d5d5;"></div>
<div style="position:absolute;left:46px;top:474px;width:2834px;height:2px;background:#d5d5d5;"></div>
<div style="position:absolute;left:46px;top:506px;width:2834px;height:2px;background:#d5d5d5;"></div>
<div style="position:absolute;left:46px;top:538px;width:2834px;height:2px;background:#d5d5d5;"></div>
<div style="position:absolute;left:46px;top:584px;width:2834px;height:2px;background:#d5d5d5;"></div>
<div style="position:absolute;left:46px;top:616px;width:2834px;height:2px;background:#d5d5d5;"></div>
<div style="position:absolute;left:46px;top:648px;width:2834px;height:2px;background:#d5d5d5;"></div>
<div style="position:absolute;left:46px;top:680px;width:2834px;height:2px;background:#d5d5d5;"></div>
<div style="position:absolute;left:46px;top:712px;width:2834px;height:2px;background:#d5d5d5;"></div>
<div style="position:absolute;left:46px;top:744px;width:2834px;height:2px;background:#d5d5d5;"></div>
<div style="position:absolute;left:46px;top:776px;width:2834px;height:2px;background:#d5d5d5;"></div>
<div style="position:absolute;left:46px;top:808px;width:2834px;height:2px;background:#d5d5d5;"></div>
<div style="position:absolute;left:46px;top:840px;width:2834px;height:2px;background:#d5d5d5;"></div>
<div style="position:absolute;left:46px;top:872px;width:2834px;height:2px;background:#d5d5d5;"></div>
<div style="position:absolute;left:46px;top:904px;width:2834px;height:2px;background:#d5d5d5;"></div>
<div style="position:absolute;left:46px;top:936px;width:2834px;height:2px;background:#d5d5d5;"></div>
<div style="position:absolute;left:46px;top:968px;width:2834px;height:2px;background:#d5d5d5;"></div>
<div style="position:absolute;left:46px;top:1000px;width:2834px;height:2px;background:#d5d5d5;"></div>
<div style="position:absolute;left:46px;top:1032px;width:2834px;height:2px;background:#d5d5d5;"></div>
<div style="position:absolute;left:46px;top:1064px;width:2834px;height:2px;background:#d5d5d5;"></div>
<div style="position:absolute;left:46px;top:1096px;width:2834px;height:2px;background:#d5d5d5;"></div>
<div style="position:absolute;left:46px;top:1128px;width:2834px;height:2px;background:#d5d5d5;"></div>
<div style="position:absolute;left:46px;top:1160px;width:2834px;height:2px;background:#d5d5d5;"></div>
<div style="position:absolute;left:46px;top:1192px;width:2834px;height:2px;background:#d5d5d5;"></div>
<div style="position:absolute;left:46px;top:1224px;width:2834px;height:2px;background:#d5d5d5;"></div>
<div style="position:absolute;left:46px;top:1256px;width:2834px;height:2px;background:#d5d5d5;"></div>
<div style="position:absolute;left:46px;top:1288px;width:2834px;height:2px;background:#d5d5d5;"></div>
<div style="position:absolute;left:46px;top:1320px;width:2834px;height:2px;background:#d5d5d5;"></div>
<div style="position:absolute;left:46px;top:1352px;width:2834px;height:2px;background:#d5d5d5;"></div>
<div style="position:absolute;left:46px;top:1384px;width:2834px;height:2px;background:#d5d5d5;"></div>
<div style="position:absolute;left:46px;top:1416px;width:2834px;height:2px;background:#d5d5d5;"></div>
<div style="position:absolute;left:46px;top:1448px;width:2834px;height:2px;background:#d5d5d5;"></div>
<div style="position:absolute;left:46px;top:1480px;width:2834px;height:2px;background:#d5d5d5;"></div>
<div style="position:absolute;left:46px;top:1512px;width:2834px;height:2px;background:#d5d5d5;"></div>
<div style="position:absolute;left:46px;top:1544px;width:2834px;height:2px;background:#d5d5d5;"></div>
<div style="position:absolute;left:46px;top:1576px;width:2834px;height:2px;background:#d5d5d5;"></div>
<div style="position:absolute;left:46px;top:1608px;width:2834px;height:2px;background:#d5d5d5;"></div>
<div style="position:absolute;left:46px;top:1640px;width:2834px;height:2px;background:#d5d5d5;"></div>
<div style="position:absolute;left:46px;top:1672px;width:2834px;height:2px;background:#d5d5d5;"></div>
<div style="position:absolute;left:46px;top:386px;width:2834px;height:2px;background:#d5d5d5;"></div>
<div style="position:absolute;left:434px;top:538px;width:522px;height:48px;background:#d0cece;"></div>
<div style="position:absolute;left:304px;top:584px;width:130px;height:386px;background:#d0cece;"></div>
<div style="position:absolute;left:436px;top:586px;width:518px;height:384px;background:#c6c6c6;"></div>
<div style="position:absolute;left:564px;top:586px;width:2px;height:384px;background:#a9a9a9;"></div>
<div style="position:absolute;left:694px;top:586px;width:2px;height:384px;background:#a9a9a9;"></div>
<div style="position:absolute;left:824px;top:586px;width:2px;height:384px;background:#a9a9a9;"></div>
<div style="position:absolute;left:436px;top:616px;width:518px;height:2px;background:#a9a9a9;"></div>
<div style="position:absolute;left:436px;top:648px;width:518px;height:2px;background:#a9a9a9;"></div>
<div style="position:absolute;left:436px;top:680px;width:518px;height:2px;background:#a9a9a9;"></div>
<div style="position:absolute;left:436px;top:712px;width:518px;height:2px;background:#a9a9a9;"></div>
<div style="position:absolute;left:436px;top:744px;width:518px;height:2px;background:#a9a9a9;"></div>
<div style="position:absolute;left:436px;top:776px;width:518px;height:2px;background:#a9a9a9;"></div>
<div style="position:absolute;left:436px;top:808px;width:518px;height:2px;background:#a9a9a9;"></div>
<div style="position:absolute;left:436px;top:840px;width:518px;height:2px;background:#a9a9a9;"></div>
<div style="position:absolute;left:436px;top:872px;width:518px;height:2px;background:#a9a9a9;"></div>
<div style="position:absolute;left:436px;top:904px;width:518px;height:2px;background:#a9a9a9;"></div>
<div style="position:absolute;left:436px;top:936px;width:518px;height:2px;background:#a9a9a9;"></div>
<div style="position:absolute;left:438px;top:588px;width:126px;height:28px;background:#fff;"></div>
<div style="position:absolute;left:432px;top:582px;width:526px;height:390px;background:transparent;border:4px solid #217346;"></div>
<div style="position:absolute;left:436px;top:586px;width:518px;height:382px;background:transparent;border:2px solid #fff;"></div>
<div style="position:absolute;left:438px;top:588px;width:126px;height:28px;background:#fff;"></div>
<div style="position:absolute;left:949px;top:963px;width:12px;height:12px;background:#217346;border:1.5px solid #fff;border-right:none;border-bottom:none;"></div>
<div style="position:absolute;left:0px;top:344px;width:2880px;height:42px;background:#171717;"></div>
<div style="position:absolute;left:434px;top:344px;width:522px;height:42px;background:#595959;"></div>
<div style="position:absolute;left:434px;top:383px;width:522px;height:3px;background:#217346;"></div>
<div style="position:absolute;top:351.97px;height:29px;line-height:29px;font-size:22.6px;color:#fff;white-space:nowrap;-webkit-text-stroke:0.7px #fff;left:-289px;width:800px;text-align:center;transform:scaleX(0.88);">A</div>
<div style="position:absolute;left:44px;top:344px;width:2px;height:42px;background:#5a5a5a;"></div>
<div style="position:absolute;top:351.97px;height:29px;line-height:29px;font-size:22.6px;color:#fff;white-space:nowrap;-webkit-text-stroke:0.7px #fff;left:-159px;width:800px;text-align:center;transform:scaleX(0.88);">B</div>
<div style="position:absolute;left:174px;top:344px;width:2px;height:42px;background:#5a5a5a;"></div>
<div style="position:absolute;top:351.97px;height:29px;line-height:29px;font-size:22.6px;color:#fff;white-space:nowrap;-webkit-text-stroke:0.7px #fff;left:-29px;width:800px;text-align:center;transform:scaleX(0.88);">C</div>
<div style="position:absolute;left:304px;top:344px;width:2px;height:42px;background:#5a5a5a;"></div>
<div style="position:absolute;top:351.97px;height:29px;line-height:29px;font-size:22.6px;color:#fff;white-space:nowrap;-webkit-text-stroke:0.7px #fff;left:101px;width:800px;text-align:center;transform:scaleX(0.88);">D</div>
<div style="position:absolute;left:434px;top:344px;width:2px;height:42px;background:#5a5a5a;"></div>
<div style="position:absolute;top:351.97px;height:29px;line-height:29px;font-size:22.6px;color:#fff;white-space:nowrap;-webkit-text-stroke:0.7px #fff;left:231px;width:800px;text-align:center;transform:scaleX(0.88);">E</div>
<div style="position:absolute;top:351.97px;height:29px;line-height:29px;font-size:22.6px;color:#fff;white-space:nowrap;-webkit-text-stroke:0.7px #fff;left:361px;width:800px;text-align:center;transform:scaleX(0.88);">F</div>
<div style="position:absolute;top:351.97px;height:29px;line-height:29px;font-size:22.6px;color:#fff;white-space:nowrap;-webkit-text-stroke:0.7px #fff;left:491px;width:800px;text-align:center;transform:scaleX(0.88);">G</div>
<div style="position:absolute;top:351.97px;height:29px;line-height:29px;font-size:22.6px;color:#fff;white-space:nowrap;-webkit-text-stroke:0.7px #fff;left:621px;width:800px;text-align:center;transform:scaleX(0.88);">H</div>
<div style="position:absolute;left:954px;top:344px;width:2px;height:42px;background:#5a5a5a;"></div>
<div style="position:absolute;top:351.97px;height:29px;line-height:29px;font-size:22.6px;color:#fff;white-space:nowrap;-webkit-text-stroke:0.7px #fff;left:751px;width:800px;text-align:center;transform:scaleX(0.88);">I</div>
<div style="position:absolute;left:1084px;top:344px;width:2px;height:42px;background:#5a5a5a;"></div>
<div style="position:absolute;top:351.97px;height:29px;line-height:29px;font-size:22.6px;color:#fff;white-space:nowrap;-webkit-text-stroke:0.7px #fff;left:881px;width:800px;text-align:center;transform:scaleX(0.88);">J</div>
<div style="position:absolute;left:1214px;top:344px;width:2px;height:42px;background:#5a5a5a;"></div>
<div style="position:absolute;top:351.97px;height:29px;line-height:29px;font-size:22.6px;color:#fff;white-space:nowrap;-webkit-text-stroke:0.7px #fff;left:1011px;width:800px;text-align:center;transform:scaleX(0.88);">K</div>
<div style="position:absolute;left:1344px;top:344px;width:2px;height:42px;background:#5a5a5a;"></div>
<div style="position:absolute;top:351.97px;height:29px;line-height:29px;font-size:22.6px;color:#fff;white-space:nowrap;-webkit-text-stroke:0.7px #fff;left:1141px;width:800px;text-align:center;transform:scaleX(0.88);">L</div>
<div style="position:absolute;left:1474px;top:344px;width:2px;height:42px;background:#5a5a5a;"></div>
<div style="position:absolute;top:351.97px;height:29px;line-height:29px;font-size:22.6px;color:#fff;white-space:nowrap;-webkit-text-stroke:0.7px #fff;left:1271px;width:800px;text-align:center;transform:scaleX(0.88);">M</div>
<div style="position:absolute;left:1604px;top:344px;width:2px;height:42px;background:#5a5a5a;"></div>
<div style="position:absolute;top:351.97px;height:29px;line-height:29px;font-size:22.6px;color:#fff;white-space:nowrap;-webkit-text-stroke:0.7px #fff;left:1401px;width:800px;text-align:center;transform:scaleX(0.88);">N</div>
<div style="position:absolute;left:1734px;top:344px;width:2px;height:42px;background:#5a5a5a;"></div>
<div style="position:absolute;top:351.97px;height:29px;line-height:29px;font-size:22.6px;color:#fff;white-space:nowrap;-webkit-text-stroke:0.7px #fff;left:1531px;width:800px;text-align:center;transform:scaleX(0.88);">O</div>
<div style="position:absolute;left:1864px;top:344px;width:2px;height:42px;background:#5a5a5a;"></div>
<div style="position:absolute;top:351.97px;height:29px;line-height:29px;font-size:22.6px;color:#fff;white-space:nowrap;-webkit-text-stroke:0.7px #fff;left:1661px;width:800px;text-align:center;transform:scaleX(0.88);">P</div>
<div style="position:absolute;left:1994px;top:344px;width:2px;height:42px;background:#5a5a5a;"></div>
<div style="position:absolute;top:351.97px;height:29px;line-height:29px;font-size:22.6px;color:#fff;white-space:nowrap;-webkit-text-stroke:0.7px #fff;left:1791px;width:800px;text-align:center;transform:scaleX(0.88);">Q</div>
<div style="position:absolute;left:2124px;top:344px;width:2px;height:42px;background:#5a5a5a;"></div>
<div style="position:absolute;top:351.97px;height:29px;line-height:29px;font-size:22.6px;color:#fff;white-space:nowrap;-webkit-text-stroke:0.7px #fff;left:1921px;width:800px;text-align:center;transform:scaleX(0.88);">R</div>
<div style="position:absolute;left:2254px;top:344px;width:2px;height:42px;background:#5a5a5a;"></div>
<div style="position:absolute;top:351.97px;height:29px;line-height:29px;font-size:22.6px;color:#fff;white-space:nowrap;-webkit-text-stroke:0.7px #fff;left:2051px;width:800px;text-align:center;transform:scaleX(0.88);">S</div>
<div style="position:absolute;left:2384px;top:344px;width:2px;height:42px;background:#5a5a5a;"></div>
<div style="position:absolute;top:351.97px;height:29px;line-height:29px;font-size:22.6px;color:#fff;white-space:nowrap;-webkit-text-stroke:0.7px #fff;left:2181px;width:800px;text-align:center;transform:scaleX(0.88);">T</div>
<div style="position:absolute;left:2514px;top:344px;width:2px;height:42px;background:#5a5a5a;"></div>
<div style="position:absolute;top:351.97px;height:29px;line-height:29px;font-size:22.6px;color:#fff;white-space:nowrap;-webkit-text-stroke:0.7px #fff;left:2311px;width:800px;text-align:center;transform:scaleX(0.88);">U</div>
<div style="position:absolute;left:2644px;top:344px;width:2px;height:42px;background:#5a5a5a;"></div>
<div style="position:absolute;top:351.97px;height:29px;line-height:29px;font-size:22.6px;color:#fff;white-space:nowrap;-webkit-text-stroke:0.7px #fff;left:2441px;width:800px;text-align:center;transform:scaleX(0.88);">V</div>
<div style="position:absolute;left:2774px;top:344px;width:2px;height:42px;background:#5a5a5a;"></div>
<div style="position:absolute;left:44px;top:344px;width:2px;height:1358px;background:#c2c2c2;"></div>
<svg style="left:0;top:344px" width="44" height="42"><path d="M40 8.2 L40 38 L10.2 38 Z" fill="#5e5e5e"/></svg>
<div style="position:absolute;left:0px;top:386px;width:44px;height:1316px;background:#171717;"></div>
<div style="position:absolute;left:0px;top:586px;width:44px;height:384px;background:#595959;"></div>
<div style="position:absolute;left:42px;top:584px;width:4px;height:386px;background:#217346;"></div>
<div style="position:absolute;top:381.10px;height:30px;line-height:30px;font-size:22.8px;color:#fff;white-space:nowrap;-webkit-text-stroke:0.65px #fff;left:-377.7px;width:800px;text-align:center;transform:scaleX(0.88);">1</div>
<div style="position:absolute;left:0px;top:410px;width:44px;height:2px;background:#5a5a5a;"></div>
<div style="position:absolute;top:413.10px;height:30px;line-height:30px;font-size:22.8px;color:#fff;white-space:nowrap;-webkit-text-stroke:0.65px #fff;left:-377.7px;width:800px;text-align:center;transform:scaleX(0.88);">2</div>
<div style="position:absolute;left:0px;top:442px;width:44px;height:2px;background:#5a5a5a;"></div>
<div style="position:absolute;top:445.10px;height:30px;line-height:30px;font-size:22.8px;color:#fff;white-space:nowrap;-webkit-text-stroke:0.65px #fff;left:-377.7px;width:800px;text-align:center;transform:scaleX(0.88);">3</div>
<div style="position:absolute;left:0px;top:474px;width:44px;height:2px;background:#5a5a5a;"></div>
<div style="position:absolute;top:477.10px;height:30px;line-height:30px;font-size:22.8px;color:#fff;white-space:nowrap;-webkit-text-stroke:0.65px #fff;left:-377.7px;width:800px;text-align:center;transform:scaleX(0.88);">4</div>
<div style="position:absolute;left:0px;top:506px;width:44px;height:2px;background:#5a5a5a;"></div>
<div style="position:absolute;top:509.10px;height:30px;line-height:30px;font-size:22.8px;color:#fff;white-space:nowrap;-webkit-text-stroke:0.65px #fff;left:-377.7px;width:800px;text-align:center;transform:scaleX(0.88);">5</div>
<div style="position:absolute;left:0px;top:538px;width:44px;height:2px;background:#5a5a5a;"></div>
<div style="position:absolute;top:555.10px;height:30px;line-height:30px;font-size:22.8px;color:#fff;white-space:nowrap;-webkit-text-stroke:0.65px #fff;left:-377.7px;width:800px;text-align:center;transform:scaleX(0.88);">6</div>
<div style="position:absolute;left:0px;top:584px;width:44px;height:2px;background:#5a5a5a;"></div>
<div style="position:absolute;top:587.10px;height:30px;line-height:30px;font-size:22.8px;color:#fff;white-space:nowrap;-webkit-text-stroke:0.65px #fff;left:-377.7px;width:800px;text-align:center;transform:scaleX(0.88);">7</div>
<div style="position:absolute;top:619.10px;height:30px;line-height:30px;font-size:22.8px;color:#fff;white-space:nowrap;-webkit-text-stroke:0.65px #fff;left:-377.7px;width:800px;text-align:center;transform:scaleX(0.88);">8</div>
<div style="position:absolute;top:651.10px;height:30px;line-height:30px;font-size:22.8px;color:#fff;white-space:nowrap;-webkit-text-stroke:0.65px #fff;left:-377.7px;width:800px;text-align:center;transform:scaleX(0.88);">9</div>
<div style="position:absolute;top:683.10px;height:30px;line-height:30px;font-size:22.8px;color:#fff;white-space:nowrap;-webkit-text-stroke:0.65px #fff;left:-377.7px;width:800px;text-align:center;transform:scaleX(0.88);">10</div>
<div style="position:absolute;top:715.10px;height:30px;line-height:30px;font-size:22.8px;color:#fff;white-space:nowrap;-webkit-text-stroke:0.65px #fff;left:-377.7px;width:800px;text-align:center;transform:scaleX(0.88);">11</div>
<div style="position:absolute;top:747.10px;height:30px;line-height:30px;font-size:22.8px;color:#fff;white-space:nowrap;-webkit-text-stroke:0.65px #fff;left:-377.7px;width:800px;text-align:center;transform:scaleX(0.88);">12</div>
<div style="position:absolute;top:779.10px;height:30px;line-height:30px;font-size:22.8px;color:#fff;white-space:nowrap;-webkit-text-stroke:0.65px #fff;left:-377.7px;width:800px;text-align:center;transform:scaleX(0.88);">13</div>
<div style="position:absolute;top:811.10px;height:30px;line-height:30px;font-size:22.8px;color:#fff;white-space:nowrap;-webkit-text-stroke:0.65px #fff;left:-377.7px;width:800px;text-align:center;transform:scaleX(0.88);">14</div>
<div style="position:absolute;top:843.10px;height:30px;line-height:30px;font-size:22.8px;color:#fff;white-space:nowrap;-webkit-text-stroke:0.65px #fff;left:-377.7px;width:800px;text-align:center;transform:scaleX(0.88);">15</div>
<div style="position:absolute;top:875.10px;height:30px;line-height:30px;font-size:22.8px;color:#fff;white-space:nowrap;-webkit-text-stroke:0.65px #fff;left:-377.7px;width:800px;text-align:center;transform:scaleX(0.88);">16</div>
<div style="position:absolute;top:907.10px;height:30px;line-height:30px;font-size:22.8px;color:#fff;white-space:nowrap;-webkit-text-stroke:0.65px #fff;left:-377.7px;width:800px;text-align:center;transform:scaleX(0.88);">17</div>
<div style="position:absolute;top:939.10px;height:30px;line-height:30px;font-size:22.8px;color:#fff;white-space:nowrap;-webkit-text-stroke:0.65px #fff;left:-377.7px;width:800px;text-align:center;transform:scaleX(0.88);">18</div>
<div style="position:absolute;left:0px;top:968px;width:44px;height:2px;background:#5a5a5a;"></div>
<div style="position:absolute;top:971.10px;height:30px;line-height:30px;font-size:22.8px;color:#fff;white-space:nowrap;-webkit-text-stroke:0.65px #fff;left:-377.7px;width:800px;text-align:center;transform:scaleX(0.88);">19</div>
<div style="position:absolute;left:0px;top:1000px;width:44px;height:2px;background:#5a5a5a;"></div>
<div style="position:absolute;top:1003.10px;height:30px;line-height:30px;font-size:22.8px;color:#fff;white-space:nowrap;-webkit-text-stroke:0.65px #fff;left:-377.7px;width:800px;text-align:center;transform:scaleX(0.88);">20</div>
<div style="position:absolute;left:0px;top:1032px;width:44px;height:2px;background:#5a5a5a;"></div>
<div style="position:absolute;top:1035.10px;height:30px;line-height:30px;font-size:22.8px;color:#fff;white-space:nowrap;-webkit-text-stroke:0.65px #fff;left:-377.7px;width:800px;text-align:center;transform:scaleX(0.88);">21</div>
<div style="position:absolute;left:0px;top:1064px;width:44px;height:2px;background:#5a5a5a;"></div>
<div style="position:absolute;top:1067.10px;height:30px;line-height:30px;font-size:22.8px;color:#fff;white-space:nowrap;-webkit-text-stroke:0.65px #fff;left:-377.7px;width:800px;text-align:center;transform:scaleX(0.88);">22</div>
<div style="position:absolute;left:0px;top:1096px;width:44px;height:2px;background:#5a5a5a;"></div>
<div style="position:absolute;top:1099.10px;height:30px;line-height:30px;font-size:22.8px;color:#fff;white-space:nowrap;-webkit-text-stroke:0.65px #fff;left:-377.7px;width:800px;text-align:center;transform:scaleX(0.88);">23</div>
<div style="position:absolute;left:0px;top:1128px;width:44px;height:2px;background:#5a5a5a;"></div>
<div style="position:absolute;top:1131.10px;height:30px;line-height:30px;font-size:22.8px;color:#fff;white-space:nowrap;-webkit-text-stroke:0.65px #fff;left:-377.7px;width:800px;text-align:center;transform:scaleX(0.88);">24</div>
<div style="position:absolute;left:0px;top:1160px;width:44px;height:2px;background:#5a5a5a;"></div>
<div style="position:absolute;top:1163.10px;height:30px;line-height:30px;font-size:22.8px;color:#fff;white-space:nowrap;-webkit-text-stroke:0.65px #fff;left:-377.7px;width:800px;text-align:center;transform:scaleX(0.88);">25</div>
<div style="position:absolute;left:0px;top:1192px;width:44px;height:2px;background:#5a5a5a;"></div>
<div style="position:absolute;top:1195.10px;height:30px;line-height:30px;font-size:22.8px;color:#fff;white-space:nowrap;-webkit-text-stroke:0.65px #fff;left:-377.7px;width:800px;text-align:center;transform:scaleX(0.88);">26</div>
<div style="position:absolute;left:0px;top:1224px;width:44px;height:2px;background:#5a5a5a;"></div>
<div style="position:absolute;top:1227.10px;height:30px;line-height:30px;font-size:22.8px;color:#fff;white-space:nowrap;-webkit-text-stroke:0.65px #fff;left:-377.7px;width:800px;text-align:center;transform:scaleX(0.88);">27</div>
<div style="position:absolute;left:0px;top:1256px;width:44px;height:2px;background:#5a5a5a;"></div>
<div style="position:absolute;top:1259.10px;height:30px;line-height:30px;font-size:22.8px;color:#fff;white-space:nowrap;-webkit-text-stroke:0.65px #fff;left:-377.7px;width:800px;text-align:center;transform:scaleX(0.88);">28</div>
<div style="position:absolute;left:0px;top:1288px;width:44px;height:2px;background:#5a5a5a;"></div>
<div style="position:absolute;top:1291.10px;height:30px;line-height:30px;font-size:22.8px;color:#fff;white-space:nowrap;-webkit-text-stroke:0.65px #fff;left:-377.7px;width:800px;text-align:center;transform:scaleX(0.88);">29</div>
<div style="position:absolute;left:0px;top:1320px;width:44px;height:2px;background:#5a5a5a;"></div>
<div style="position:absolute;top:1323.10px;height:30px;line-height:30px;font-size:22.8px;color:#fff;white-space:nowrap;-webkit-text-stroke:0.65px #fff;left:-377.7px;width:800px;text-align:center;transform:scaleX(0.88);">30</div>
<div style="position:absolute;left:0px;top:1352px;width:44px;height:2px;background:#5a5a5a;"></div>
<div style="position:absolute;top:1355.10px;height:30px;line-height:30px;font-size:22.8px;color:#fff;white-space:nowrap;-webkit-text-stroke:0.65px #fff;left:-377.7px;width:800px;text-align:center;transform:scaleX(0.88);">31</div>
<div style="position:absolute;left:0px;top:1384px;width:44px;height:2px;background:#5a5a5a;"></div>
<div style="position:absolute;top:1387.10px;height:30px;line-height:30px;font-size:22.8px;color:#fff;white-space:nowrap;-webkit-text-stroke:0.65px #fff;left:-377.7px;width:800px;text-align:center;transform:scaleX(0.88);">32</div>
<div style="position:absolute;left:0px;top:1416px;width:44px;height:2px;background:#5a5a5a;"></div>
<div style="position:absolute;top:1419.10px;height:30px;line-height:30px;font-size:22.8px;color:#fff;white-space:nowrap;-webkit-text-stroke:0.65px #fff;left:-377.7px;width:800px;text-align:center;transform:scaleX(0.88);">33</div>
<div style="position:absolute;left:0px;top:1448px;width:44px;height:2px;background:#5a5a5a;"></div>
<div style="position:absolute;top:1451.10px;height:30px;line-height:30px;font-size:22.8px;color:#fff;white-space:nowrap;-webkit-text-stroke:0.65px #fff;left:-377.7px;width:800px;text-align:center;transform:scaleX(0.88);">34</div>
<div style="position:absolute;left:0px;top:1480px;width:44px;height:2px;background:#5a5a5a;"></div>
<div style="position:absolute;top:1483.10px;height:30px;line-height:30px;font-size:22.8px;color:#fff;white-space:nowrap;-webkit-text-stroke:0.65px #fff;left:-377.7px;width:800px;text-align:center;transform:scaleX(0.88);">35</div>
<div style="position:absolute;left:0px;top:1512px;width:44px;height:2px;background:#5a5a5a;"></div>
<div style="position:absolute;top:1515.10px;height:30px;line-height:30px;font-size:22.8px;color:#fff;white-space:nowrap;-webkit-text-stroke:0.65px #fff;left:-377.7px;width:800px;text-align:center;transform:scaleX(0.88);">36</div>
<div style="position:absolute;left:0px;top:1544px;width:44px;height:2px;background:#5a5a5a;"></div>
<div style="position:absolute;top:1547.10px;height:30px;line-height:30px;font-size:22.8px;color:#fff;white-space:nowrap;-webkit-text-stroke:0.65px #fff;left:-377.7px;width:800px;text-align:center;transform:scaleX(0.88);">37</div>
<div style="position:absolute;left:0px;top:1576px;width:44px;height:2px;background:#5a5a5a;"></div>
<div style="position:absolute;top:1579.10px;height:30px;line-height:30px;font-size:22.8px;color:#fff;white-space:nowrap;-webkit-text-stroke:0.65px #fff;left:-377.7px;width:800px;text-align:center;transform:scaleX(0.88);">38</div>
<div style="position:absolute;left:0px;top:1608px;width:44px;height:2px;background:#5a5a5a;"></div>
<div style="position:absolute;top:1611.10px;height:30px;line-height:30px;font-size:22.8px;color:#fff;white-space:nowrap;-webkit-text-stroke:0.65px #fff;left:-377.7px;width:800px;text-align:center;transform:scaleX(0.88);">39</div>
<div style="position:absolute;left:0px;top:1640px;width:44px;height:2px;background:#5a5a5a;"></div>
<div style="position:absolute;top:1643.10px;height:30px;line-height:30px;font-size:22.8px;color:#fff;white-space:nowrap;-webkit-text-stroke:0.65px #fff;left:-377.7px;width:800px;text-align:center;transform:scaleX(0.88);">40</div>
<div style="position:absolute;left:0px;top:1672px;width:44px;height:2px;background:#5a5a5a;"></div>
<div style="position:absolute;top:1675.10px;height:30px;line-height:30px;font-size:22.8px;color:#fff;white-space:nowrap;-webkit-text-stroke:0.65px #fff;left:-377.7px;width:800px;text-align:center;transform:scaleX(0.88);">41</div>
<div style="position:absolute;left:0px;top:386px;width:46px;height:2px;background:#c6c6c6;"></div>
<div style="position:absolute;left:0px;top:344px;width:44px;height:42px;background:#171717;"></div>
<svg style="left:0;top:344px" width="44" height="42"><path d="M40 8.2 L40 38 L10.2 38 Z" fill="#5e5e5e"/></svg>
<div style="position:absolute;left:44px;top:344px;width:2px;height:1358px;background:#c2c2c2;"></div>
<div style="position:absolute;left:42px;top:584px;width:4px;height:386px;background:#217346;"></div>
<div style="position:absolute;top:556.90px;height:27px;line-height:27px;font-size:20.5px;color:#000;white-space:nowrap;font-weight:bold;left:441px;">Est</div>
<div style="position:absolute;top:556.90px;height:27px;line-height:27px;font-size:20.5px;color:#000;white-space:nowrap;font-weight:bold;left:571px;">Ovest</div>
<div style="position:absolute;top:556.90px;height:27px;line-height:27px;font-size:20.5px;color:#000;white-space:nowrap;font-weight:bold;left:701px;">Nord</div>
<div style="position:absolute;top:556.90px;height:27px;line-height:27px;font-size:20.5px;color:#000;white-space:nowrap;font-weight:bold;left:831px;">Sud</div>
<div style="position:absolute;top:588.90px;height:27px;line-height:27px;font-size:20.5px;color:#000;white-space:nowrap;font-weight:bold;left:310px;">Gennaio</div>
<div style="position:absolute;top:588.05px;height:28px;line-height:28px;font-size:21.5px;color:#000;white-space:nowrap;right:2320.5px;text-align:right;">€ 25,25</div>
<div style="position:absolute;top:588.05px;height:28px;line-height:28px;font-size:21.5px;color:#000;white-space:nowrap;right:2190.5px;text-align:right;">€ 80,90</div>
<div style="position:absolute;top:588.05px;height:28px;line-height:28px;font-size:21.5px;color:#000;white-space:nowrap;right:2060.5px;text-align:right;">€ 6</div>
<div style="position:absolute;top:588.05px;height:28px;line-height:28px;font-size:21.5px;color:#000;white-space:nowrap;right:1930.5px;text-align:right;">€ 90</div>
<div style="position:absolute;top:620.90px;height:27px;line-height:27px;font-size:20.5px;color:#000;white-space:nowrap;font-weight:bold;left:310px;">Febbraio</div>
<div style="position:absolute;top:620.05px;height:28px;line-height:28px;font-size:21.5px;color:#000;white-space:nowrap;right:2320.5px;text-align:right;">€ 14,90</div>
<div style="position:absolute;top:620.05px;height:28px;line-height:28px;font-size:21.5px;color:#000;white-space:nowrap;right:2190.5px;text-align:right;">€ 13,31</div>
<div style="position:absolute;top:620.05px;height:28px;line-height:28px;font-size:21.5px;color:#000;white-space:nowrap;right:2060.5px;text-align:right;">€ 14</div>
<div style="position:absolute;top:620.05px;height:28px;line-height:28px;font-size:21.5px;color:#000;white-space:nowrap;right:1930.5px;text-align:right;">€ 78</div>
<div style="position:absolute;top:652.90px;height:27px;line-height:27px;font-size:20.5px;color:#000;white-space:nowrap;font-weight:bold;left:310px;">Marzo</div>
<div style="position:absolute;top:652.05px;height:28px;line-height:28px;font-size:21.5px;color:#000;white-space:nowrap;right:2320.5px;text-align:right;">€ 27</div>
<div style="position:absolute;top:652.05px;height:28px;line-height:28px;font-size:21.5px;color:#000;white-space:nowrap;right:2190.5px;text-align:right;">€ 28,32</div>
<div style="position:absolute;top:652.05px;height:28px;line-height:28px;font-size:21.5px;color:#000;white-space:nowrap;right:2060.5px;text-align:right;">€ 15,50</div>
<div style="position:absolute;top:652.05px;height:28px;line-height:28px;font-size:21.5px;color:#000;white-space:nowrap;right:1930.5px;text-align:right;">€ 66,62</div>
<div style="position:absolute;top:684.90px;height:27px;line-height:27px;font-size:20.5px;color:#000;white-space:nowrap;font-weight:bold;left:310px;">Aprile</div>
<div style="position:absolute;top:684.05px;height:28px;line-height:28px;font-size:21.5px;color:#000;white-space:nowrap;right:2320.5px;text-align:right;">€ 45,50</div>
<div style="position:absolute;top:684.05px;height:28px;line-height:28px;font-size:21.5px;color:#000;white-space:nowrap;right:2190.5px;text-align:right;">€ 38</div>
<div style="position:absolute;top:684.05px;height:28px;line-height:28px;font-size:21.5px;color:#000;white-space:nowrap;right:2060.5px;text-align:right;">€ 5,50</div>
<div style="position:absolute;top:684.05px;height:28px;line-height:28px;font-size:21.5px;color:#000;white-space:nowrap;right:1930.5px;text-align:right;">€ 44,50</div>
<div style="position:absolute;top:716.90px;height:27px;line-height:27px;font-size:20.5px;color:#000;white-space:nowrap;font-weight:bold;left:310px;">Maggio</div>
<div style="position:absolute;top:716.05px;height:28px;line-height:28px;font-size:21.5px;color:#000;white-space:nowrap;right:2320.5px;text-align:right;">€ 23,90</div>
<div style="position:absolute;top:716.05px;height:28px;line-height:28px;font-size:21.5px;color:#000;white-space:nowrap;right:2190.5px;text-align:right;">€ 77,23</div>
<div style="position:absolute;top:716.05px;height:28px;line-height:28px;font-size:21.5px;color:#000;white-space:nowrap;right:2060.5px;text-align:right;">€ 90</div>
<div style="position:absolute;top:716.05px;height:28px;line-height:28px;font-size:21.5px;color:#000;white-space:nowrap;right:1930.5px;text-align:right;">€ 47,12</div>
<div style="position:absolute;top:748.90px;height:27px;line-height:27px;font-size:20.5px;color:#000;white-space:nowrap;font-weight:bold;left:310px;">Giugno</div>
<div style="position:absolute;top:748.05px;height:28px;line-height:28px;font-size:21.5px;color:#000;white-space:nowrap;right:2320.5px;text-align:right;">€ 33,30</div>
<div style="position:absolute;top:748.05px;height:28px;line-height:28px;font-size:21.5px;color:#000;white-space:nowrap;right:2190.5px;text-align:right;">€ 36,60</div>
<div style="position:absolute;top:748.05px;height:28px;line-height:28px;font-size:21.5px;color:#000;white-space:nowrap;right:2060.5px;text-align:right;">€ 52,90</div>
<div style="position:absolute;top:748.05px;height:28px;line-height:28px;font-size:21.5px;color:#000;white-space:nowrap;right:1930.5px;text-align:right;">€ 41,90</div>
<div style="position:absolute;top:780.90px;height:27px;line-height:27px;font-size:20.5px;color:#000;white-space:nowrap;font-weight:bold;left:310px;">Luglio</div>
<div style="position:absolute;top:780.05px;height:28px;line-height:28px;font-size:21.5px;color:#000;white-space:nowrap;right:2320.5px;text-align:right;">€ 19,23</div>
<div style="position:absolute;top:780.05px;height:28px;line-height:28px;font-size:21.5px;color:#000;white-space:nowrap;right:2190.5px;text-align:right;">€ 42,90</div>
<div style="position:absolute;top:780.05px;height:28px;line-height:28px;font-size:21.5px;color:#000;white-space:nowrap;right:2060.5px;text-align:right;">€ 42,80</div>
<div style="position:absolute;top:780.05px;height:28px;line-height:28px;font-size:21.5px;color:#000;white-space:nowrap;right:1930.5px;text-align:right;">€ 39,77</div>
<div style="position:absolute;top:812.90px;height:27px;line-height:27px;font-size:20.5px;color:#000;white-space:nowrap;font-weight:bold;left:310px;">Agosto</div>
<div style="position:absolute;top:812.05px;height:28px;line-height:28px;font-size:21.5px;color:#000;white-space:nowrap;right:2320.5px;text-align:right;">€ 65,12</div>
<div style="position:absolute;top:812.05px;height:28px;line-height:28px;font-size:21.5px;color:#000;white-space:nowrap;right:2190.5px;text-align:right;">€ 50,10</div>
<div style="position:absolute;top:812.05px;height:28px;line-height:28px;font-size:21.5px;color:#000;white-space:nowrap;right:2060.5px;text-align:right;">€ 67,30</div>
<div style="position:absolute;top:812.05px;height:28px;line-height:28px;font-size:21.5px;color:#000;white-space:nowrap;right:1930.5px;text-align:right;">€ 15</div>
<div style="position:absolute;top:844.90px;height:27px;line-height:27px;font-size:20.5px;color:#000;white-space:nowrap;font-weight:bold;left:310px;">Settembre</div>
<div style="position:absolute;top:844.05px;height:28px;line-height:28px;font-size:21.5px;color:#000;white-space:nowrap;right:2320.5px;text-align:right;">€ 29,80</div>
<div style="position:absolute;top:844.05px;height:28px;line-height:28px;font-size:21.5px;color:#000;white-space:nowrap;right:2190.5px;text-align:right;">€ 38,60</div>
<div style="position:absolute;top:844.05px;height:28px;line-height:28px;font-size:21.5px;color:#000;white-space:nowrap;right:2060.5px;text-align:right;">€ 52,20</div>
<div style="position:absolute;top:844.05px;height:28px;line-height:28px;font-size:21.5px;color:#000;white-space:nowrap;right:1930.5px;text-align:right;">€ 38</div>
<div style="position:absolute;top:876.90px;height:27px;line-height:27px;font-size:20.5px;color:#000;white-space:nowrap;font-weight:bold;left:310px;">Ottobre</div>
<div style="position:absolute;top:876.05px;height:28px;line-height:28px;font-size:21.5px;color:#000;white-space:nowrap;right:2320.5px;text-align:right;">€ 43,34</div>
<div style="position:absolute;top:876.05px;height:28px;line-height:28px;font-size:21.5px;color:#000;white-space:nowrap;right:2190.5px;text-align:right;">€ 63,40</div>
<div style="position:absolute;top:876.05px;height:28px;line-height:28px;font-size:21.5px;color:#000;white-space:nowrap;right:2060.5px;text-align:right;">€ 35</div>
<div style="position:absolute;top:876.05px;height:28px;line-height:28px;font-size:21.5px;color:#000;white-space:nowrap;right:1930.5px;text-align:right;">€ 62,90</div>
<div style="position:absolute;top:908.90px;height:27px;line-height:27px;font-size:20.5px;color:#000;white-space:nowrap;font-weight:bold;left:310px;">Novembre</div>
<div style="position:absolute;top:908.05px;height:28px;line-height:28px;font-size:21.5px;color:#000;white-space:nowrap;right:2320.5px;text-align:right;">€ 12,90</div>
<div style="position:absolute;top:908.05px;height:28px;line-height:28px;font-size:21.5px;color:#000;white-space:nowrap;right:2190.5px;text-align:right;">€ 9,71</div>
<div style="position:absolute;top:908.05px;height:28px;line-height:28px;font-size:21.5px;color:#000;white-space:nowrap;right:2060.5px;text-align:right;">€ 88,80</div>
<div style="position:absolute;top:908.05px;height:28px;line-height:28px;font-size:21.5px;color:#000;white-space:nowrap;right:1930.5px;text-align:right;">€ 57,60</div>
<div style="position:absolute;top:940.90px;height:27px;line-height:27px;font-size:20.5px;color:#000;white-space:nowrap;font-weight:bold;left:310px;">Dicembre</div>
<div style="position:absolute;top:940.05px;height:28px;line-height:28px;font-size:21.5px;color:#000;white-space:nowrap;right:2320.5px;text-align:right;">€ 52,20</div>
<div style="position:absolute;top:940.05px;height:28px;line-height:28px;font-size:21.5px;color:#000;white-space:nowrap;right:2190.5px;text-align:right;">€ 55,55</div>
<div style="position:absolute;top:940.05px;height:28px;line-height:28px;font-size:21.5px;color:#000;white-space:nowrap;right:2060.5px;text-align:right;">€ 32,30</div>
<div style="position:absolute;top:940.05px;height:28px;line-height:28px;font-size:21.5px;color:#000;white-space:nowrap;right:1930.5px;text-align:right;">€ 37,36</div>
<div style="position:absolute;left:0px;top:1702px;width:2880px;height:52px;background:#323232;"></div>
<div style="position:absolute;left:0px;top:1702px;width:2880px;height:2px;background:#5c5c5c;"></div>
<div style="position:absolute;left:0px;top:1753px;width:2880px;height:2px;background:#0c0c0c;"></div>
<div style="position:absolute;left:0px;top:1755px;width:2880px;height:45px;background:linear-gradient(#474747,#3a3a3a);"></div>
<div style="position:absolute;left:120px;top:1702px;width:160px;height:46px;background:#6c6c6c;border-radius:0 0 7px 7px;"></div>
<div style="position:absolute;left:122px;top:1702px;width:156px;height:44.5px;background:#fff;border-radius:0 0 5px 5px;"></div>
<div style="position:absolute;top:1713.20px;height:29px;line-height:29px;font-size:22.5px;color:#1f8653;white-space:nowrap;font-weight:bold;left:159px;letter-spacing:0.085px;">Foglio1</div>
<div style="position:absolute;left:354px;top:1704px;width:2px;height:41px;background:#595959;"></div>
<svg style="left:0;top:1702px" width="2880" height="98" viewBox="0 1702 2880 98"><path d="M44 1719.5 V1739.5 L30 1729.5 Z M76 1719.5 V1739.5 L90 1729.5 Z" fill="#6b6b6b"/><path d="M318 1718 V1738 M308 1728 H328" stroke="#b0b0b0" stroke-width="4.2"/><circle cx="174.7" cy="1766.5" r="3.6" fill="none" stroke="#ececec" stroke-width="1.9"/><path d="M162.9 1768.6 Q168.8 1773.4 174.7 1773.2 Q181.4 1773.2 187.3 1767.9 M162.9 1768.6 L162.4 1771 M187.3 1767.9 L188 1770.2 M169.6 1773.2 C170.4 1780.3 169.6 1784.8 166.6 1788.8 Q166.8 1791.6 170.2 1789.6 M179.9 1773.2 L180.3 1778.8" fill="none" stroke="#ececec" stroke-width="1.9" stroke-linecap="round" stroke-linejoin="round"/><path d="M175.6 1785.4 L182.2 1790.8 L193.2 1780.2" fill="none" stroke="#ececec" stroke-width="2"/><rect x="2242" y="1755" width="74" height="45" fill="#5b5b5b"/><path d="M2268 1766 H2292 V1790 H2268 Z M2276 1766 V1790 M2284 1766 V1790 M2268 1774 H2292 M2268 1782 H2292" fill="none" stroke="#f0f0f0" stroke-width="1.9"/><rect x="2338" y="1766" width="26" height="24" fill="none" stroke="#f0f0f0" stroke-width="1.9"/><rect x="2343.5" y="1770.8" width="15" height="14.4" fill="none" stroke="#f0f0f0" stroke-width="1.8"/><path d="M2346.5 1775.6 H2355.5 M2346.5 1780.2 H2355.5" stroke="#f0f0f0" stroke-width="1.8"/><rect x="2409.6" y="1766" width="26" height="24" fill="none" stroke="#f0f0f0" stroke-width="1.9"/><path d="M2418 1766 V1778.4 H2428 V1766" fill="none" stroke="#f0f0f0" stroke-width="1.9"/><path d="M2474 1777.3 H2490" stroke="#f0f0f0" stroke-width="3.6"/><rect x="2504" y="1773.6" width="200.5" height="7.4" rx="3.7" fill="#7c7c7c"/><circle cx="2603.4" cy="1777.3" r="16" fill="#a4a4a4"/><path d="M2717.5 1777.3 H2734.5 M2726 1768.8 V1785.8" stroke="#f0f0f0" stroke-width="3.6"/></svg>
<div style="position:absolute;top:1761.68px;height:31px;line-height:31px;font-size:24px;color:#e8e8e8;white-space:nowrap;left:49px;letter-spacing:0.457px;">Pronto</div>
<div style="position:absolute;top:1761.68px;height:31px;line-height:31px;font-size:24px;color:#e8e8e8;white-space:nowrap;left:199.6px;letter-spacing:0.680px;">Accessibilità: conforme</div>
<div style="position:absolute;top:1761.68px;height:31px;line-height:31px;font-size:24px;color:#e8e8e8;white-space:nowrap;left:1590px;letter-spacing:0.825px;">Media: € 42,67</div>
<div style="position:absolute;top:1761.68px;height:31px;line-height:31px;font-size:24px;color:#e8e8e8;white-space:nowrap;left:1800.6px;letter-spacing:0.879px;">Conteggio: 48</div>
<div style="position:absolute;top:1761.68px;height:31px;line-height:31px;font-size:24px;color:#e8e8e8;white-space:nowrap;left:2003px;letter-spacing:0.471px;">Somma: € 2.048,13</div>
<div style="position:absolute;top:1761.68px;height:31px;line-height:31px;font-size:24px;color:#e8e8e8;white-space:nowrap;left:2768px;letter-spacing:0.405px;">100%</div>
<div style="position:absolute;left:1232px;top:218px;width:590px;height:1016px;background:#303030;border-radius:7px;box-shadow:0 0 0 1px rgba(0,0,0,0.8),0 7px 26px 2px rgba(0,0,0,0.30);"><div style="position:absolute;left:0;top:0;width:590px;height:1008px;overflow:hidden;border-radius:7px 7px 0 0;"><svg style="left:10px;top:18px;overflow:hidden" width="540" height="324" viewBox="0 0 540 324"><rect width="540" height="324" fill="#fff"/><text x="270" y="31.5" text-anchor="middle" font-size="19.3" fill="#595959" font-family="Liberation Sans, sans-serif">Titolo del grafico</text><rect x="69.7" y="54.7" width="454.1" height="1.4" fill="#d9d9d9"/><text x="57" y="59.7" text-anchor="end" font-size="12.1" fill="#595959" font-family="Liberation Sans, sans-serif">€ 100,00</text><rect x="69.7" y="74.7" width="454.1" height="1.4" fill="#d9d9d9"/><text x="57" y="79.7" text-anchor="end" font-size="12.1" fill="#595959" font-family="Liberation Sans, sans-serif">€ 90,00</text><rect x="69.7" y="94.7" width="454.1" height="1.4" fill="#d9d9d9"/><text x="57" y="99.7" text-anchor="end" font-size="12.1" fill="#595959" font-family="Liberation Sans, sans-serif">€ 80,00</text><rect x="69.7" y="114.7" width="454.1" height="1.4" fill="#d9d9d9"/><text x="57" y="119.7" text-anchor="end" font-size="12.1" fill="#595959" font-family="Liberation Sans, sans-serif">€ 70,00</text><rect x="69.7" y="134.7" width="454.1" height="1.4" fill="#d9d9d9"/><text x="57" y="139.7" text-anchor="end" font-size="12.1" fill="#595959" font-family="Liberation Sans, sans-serif">€ 60,00</text><rect x="69.7" y="154.7" width="454.1" height="1.4" fill="#d9d9d9"/><text x="57" y="159.7" text-anchor="end" font-size="12.1" fill="#595959" font-family="Liberation Sans, sans-serif">€ 50,00</text><rect x="69.7" y="174.7" width="454.1" height="1.4" fill="#d9d9d9"/><text x="57" y="179.7" text-anchor="end" font-size="12.1" fill="#595959" font-family="Liberation Sans, sans-serif">€ 40,00</text><rect x="69.7" y="194.7" width="454.1" height="1.4" fill="#d9d9d9"/><text x="57" y="199.7" text-anchor="end" font-size="12.1" fill="#595959" font-family="Liberation Sans, sans-serif">€ 30,00</text><rect x="69.7" y="214.7" width="454.1" height="1.4" fill="#d9d9d9"/><text x="57" y="219.7" text-anchor="end" font-size="12.1" fill="#595959" font-family="Liberation Sans, sans-serif">€ 20,00</text><rect x="69.7" y="234.7" width="454.1" height="1.4" fill="#d9d9d9"/><text x="57" y="239.7" text-anchor="end" font-size="12.1" fill="#595959" font-family="Liberation Sans, sans-serif">€ 10,00</text><rect x="69.7" y="254.7" width="454.1" height="1.4" fill="#d9d9d9"/><text x="57" y="259.7" text-anchor="end" font-size="12.1" fill="#595959" font-family="Liberation Sans, sans-serif">€ 0,00</text><rect x="75.60" y="204.90" width="5.4" height="50.50" fill="#4472c4"/><rect x="82.47" y="93.60" width="5.4" height="161.80" fill="#ed7d31"/><rect x="89.34" y="243.40" width="5.4" height="12.00" fill="#a5a5a5"/><rect x="96.21" y="75.40" width="5.4" height="180.00" fill="#fdbf2d"/><text x="88.6" y="277.3" text-anchor="middle" font-size="12.1" fill="#595959" font-family="Liberation Sans, sans-serif">1</text><rect x="113.44" y="225.60" width="5.4" height="29.80" fill="#4472c4"/><rect x="120.31" y="228.78" width="5.4" height="26.62" fill="#ed7d31"/><rect x="127.18" y="227.40" width="5.4" height="28.00" fill="#a5a5a5"/><rect x="134.05" y="99.40" width="5.4" height="156.00" fill="#fdbf2d"/><text x="126.5" y="277.3" text-anchor="middle" font-size="12.1" fill="#595959" font-family="Liberation Sans, sans-serif">2</text><rect x="151.28" y="201.40" width="5.4" height="54.00" fill="#4472c4"/><rect x="158.15" y="198.76" width="5.4" height="56.64" fill="#ed7d31"/><rect x="165.02" y="224.40" width="5.4" height="31.00" fill="#a5a5a5"/><rect x="171.89" y="122.16" width="5.4" height="133.24" fill="#fdbf2d"/><text x="164.3" y="277.3" text-anchor="middle" font-size="12.1" fill="#595959" font-family="Liberation Sans, sans-serif">3</text><rect x="189.13" y="164.40" width="5.4" height="91.00" fill="#4472c4"/><rect x="196.00" y="179.40" width="5.4" height="76.00" fill="#ed7d31"/><rect x="202.87" y="244.40" width="5.4" height="11.00" fill="#a5a5a5"/><rect x="209.74" y="166.40" width="5.4" height="89.00" fill="#fdbf2d"/><text x="202.1" y="277.3" text-anchor="middle" font-size="12.1" fill="#595959" font-family="Liberation Sans, sans-serif">4</text><rect x="226.97" y="207.60" width="5.4" height="47.80" fill="#4472c4"/><rect x="233.84" y="100.94" width="5.4" height="154.46" fill="#ed7d31"/><rect x="240.71" y="75.40" width="5.4" height="180.00" fill="#a5a5a5"/><rect x="247.58" y="161.16" width="5.4" height="94.24" fill="#fdbf2d"/><text x="240.0" y="277.3" text-anchor="middle" font-size="12.1" fill="#595959" font-family="Liberation Sans, sans-serif">5</text><rect x="264.81" y="188.80" width="5.4" height="66.60" fill="#4472c4"/><rect x="271.68" y="182.20" width="5.4" height="73.20" fill="#ed7d31"/><rect x="278.55" y="149.60" width="5.4" height="105.80" fill="#a5a5a5"/><rect x="285.42" y="171.60" width="5.4" height="83.80" fill="#fdbf2d"/><text x="277.8" y="277.3" text-anchor="middle" font-size="12.1" fill="#595959" font-family="Liberation Sans, sans-serif">6</text><rect x="302.65" y="216.94" width="5.4" height="38.46" fill="#4472c4"/><rect x="309.52" y="169.60" width="5.4" height="85.80" fill="#ed7d31"/><rect x="316.39" y="169.80" width="5.4" height="85.60" fill="#a5a5a5"/><rect x="323.26" y="175.86" width="5.4" height="79.54" fill="#fdbf2d"/><text x="315.7" y="277.3" text-anchor="middle" font-size="12.1" fill="#595959" font-family="Liberation Sans, sans-serif">7</text><rect x="340.49" y="125.16" width="5.4" height="130.24" fill="#4472c4"/><rect x="347.36" y="155.20" width="5.4" height="100.20" fill="#ed7d31"/><rect x="354.23" y="120.80" width="5.4" height="134.60" fill="#a5a5a5"/><rect x="361.10" y="225.40" width="5.4" height="30.00" fill="#fdbf2d"/><text x="353.5" y="277.3" text-anchor="middle" font-size="12.1" fill="#595959" font-family="Liberation Sans, sans-serif">8</text><rect x="378.33" y="195.80" width="5.4" height="59.60" fill="#4472c4"/><rect x="385.20" y="178.20" width="5.4" height="77.20" fill="#ed7d31"/><rect x="392.07" y="151.00" width="5.4" height="104.40" fill="#a5a5a5"/><rect x="398.94" y="179.40" width="5.4" height="76.00" fill="#fdbf2d"/><text x="391.4" y="277.3" text-anchor="middle" font-size="12.1" fill="#595959" font-family="Liberation Sans, sans-serif">9</text><rect x="416.18" y="168.72" width="5.4" height="86.68" fill="#4472c4"/><rect x="423.05" y="128.60" width="5.4" height="126.80" fill="#ed7d31"/><rect x="429.92" y="185.40" width="5.4" height="70.00" fill="#a5a5a5"/><rect x="436.79" y="129.60" width="5.4" height="125.80" fill="#fdbf2d"/><text x="429.2" y="277.3" text-anchor="middle" font-size="12.1" fill="#595959" font-family="Liberation Sans, sans-serif">10</text><rect x="454.02" y="229.60" width="5.4" height="25.80" fill="#4472c4"/><rect x="460.89" y="235.98" width="5.4" height="19.42" fill="#ed7d31"/><rect x="467.76" y="77.80" width="5.4" height="177.60" fill="#a5a5a5"/><rect x="474.63" y="140.20" width="5.4" height="115.20" fill="#fdbf2d"/><text x="467.0" y="277.3" text-anchor="middle" font-size="12.1" fill="#595959" font-family="Liberation Sans, sans-serif">11</text><rect x="491.86" y="151.00" width="5.4" height="104.40" fill="#4472c4"/><rect x="498.73" y="144.30" width="5.4" height="111.10" fill="#ed7d31"/><rect x="505.60" y="190.80" width="5.4" height="64.60" fill="#a5a5a5"/><rect x="512.47" y="180.68" width="5.4" height="74.72" fill="#fdbf2d"/><text x="504.9" y="277.3" text-anchor="middle" font-size="12.1" fill="#595959" font-family="Liberation Sans, sans-serif">12</text><rect x="165.5" y="299.2" width="6.6" height="6.6" fill="#4472c4"/><text x="175.8" y="306.9" font-size="11.8" fill="#595959" font-family="Liberation Sans, sans-serif">Serie1</text><rect x="222.4" y="299.2" width="6.6" height="6.6" fill="#ed7d31"/><text x="232.7" y="306.9" font-size="11.8" fill="#595959" font-family="Liberation Sans, sans-serif">Serie2</text><rect x="279.4" y="299.2" width="6.6" height="6.6" fill="#a5a5a5"/><text x="289.7" y="306.9" font-size="11.8" fill="#595959" font-family="Liberation Sans, sans-serif">Serie3</text><rect x="336.3" y="299.2" width="6.6" height="6.6" fill="#fdbf2d"/><text x="346.6" y="306.9" font-size="11.8" fill="#595959" font-family="Liberation Sans, sans-serif">Serie4</text></svg><div style="position:absolute;left:187.0px;top:350.5px;height:26px;line-height:26px;white-space:nowrap;font-size:19.5px;color:#ececec;-webkit-text-stroke:0.3px #ececec;letter-spacing:0.098px;">Colonne raggruppate</div><svg style="left:10px;top:412px;overflow:hidden" width="540" height="324" viewBox="0 0 540 324"><rect width="540" height="324" fill="#fff"/><text x="270" y="31.5" text-anchor="middle" font-size="19.3" fill="#595959" font-family="Liberation Sans, sans-serif">Titolo del grafico</text><rect x="35.2" y="55" width="1.2" height="200" fill="#dcdcdc"/><text x="35.8" y="276.8" text-anchor="middle" font-size="12.1" fill="#595959" font-family="Liberation Sans, sans-serif">€ 0,00</text><rect x="128.0" y="55" width="1.2" height="200" fill="#dcdcdc"/><text x="128.6" y="276.8" text-anchor="middle" font-size="12.1" fill="#595959" font-family="Liberation Sans, sans-serif">€ 20,00</text><rect x="220.8" y="55" width="1.2" height="200" fill="#dcdcdc"/><text x="221.4" y="276.8" text-anchor="middle" font-size="12.1" fill="#595959" font-family="Liberation Sans, sans-serif">€ 40,00</text><rect x="313.5" y="55" width="1.2" height="200" fill="#dcdcdc"/><text x="314.1" y="276.8" text-anchor="middle" font-size="12.1" fill="#595959" font-family="Liberation Sans, sans-serif">€ 60,00</text><rect x="406.3" y="55" width="1.2" height="200" fill="#dcdcdc"/><text x="406.9" y="276.8" text-anchor="middle" font-size="12.1" fill="#595959" font-family="Liberation Sans, sans-serif">€ 80,00</text><rect x="499.1" y="55" width="1.2" height="200" fill="#dcdcdc"/><text x="499.7" y="276.8" text-anchor="middle" font-size="12.1" fill="#595959" font-family="Liberation Sans, sans-serif">€ 100,00</text><rect x="35.8" y="240.93" width="417.51" height="2.38" fill="#fdbf2d"/><rect x="35.8" y="243.95" width="27.83" height="2.38" fill="#a5a5a5"/><rect x="35.8" y="246.97" width="375.30" height="2.38" fill="#ed7d31"/><rect x="35.8" y="249.99" width="117.13" height="2.38" fill="#4472c4"/><text x="23.8" y="251.0" text-anchor="end" font-size="12.1" fill="#595959" font-family="Liberation Sans, sans-serif">1</text><rect x="35.8" y="224.27" width="361.84" height="2.38" fill="#fdbf2d"/><rect x="35.8" y="227.29" width="64.95" height="2.38" fill="#a5a5a5"/><rect x="35.8" y="230.31" width="61.75" height="2.38" fill="#ed7d31"/><rect x="35.8" y="233.33" width="69.12" height="2.38" fill="#4472c4"/><text x="23.8" y="234.3" text-anchor="end" font-size="12.1" fill="#595959" font-family="Liberation Sans, sans-serif">2</text><rect x="35.8" y="207.60" width="309.05" height="2.38" fill="#fdbf2d"/><rect x="35.8" y="210.62" width="71.90" height="2.38" fill="#a5a5a5"/><rect x="35.8" y="213.64" width="131.38" height="2.38" fill="#ed7d31"/><rect x="35.8" y="216.66" width="125.25" height="2.38" fill="#4472c4"/><text x="23.8" y="217.6" text-anchor="end" font-size="12.1" fill="#595959" font-family="Liberation Sans, sans-serif">3</text><rect x="35.8" y="190.93" width="206.44" height="2.38" fill="#fdbf2d"/><rect x="35.8" y="193.95" width="25.51" height="2.38" fill="#a5a5a5"/><rect x="35.8" y="196.97" width="176.28" height="2.38" fill="#ed7d31"/><rect x="35.8" y="199.99" width="211.07" height="2.38" fill="#4472c4"/><text x="23.8" y="201.0" text-anchor="end" font-size="12.1" fill="#595959" font-family="Liberation Sans, sans-serif">4</text><rect x="35.8" y="174.27" width="218.59" height="2.38" fill="#fdbf2d"/><rect x="35.8" y="177.29" width="417.51" height="2.38" fill="#a5a5a5"/><rect x="35.8" y="180.31" width="358.27" height="2.38" fill="#ed7d31"/><rect x="35.8" y="183.33" width="110.87" height="2.38" fill="#4472c4"/><text x="23.8" y="184.3" text-anchor="end" font-size="12.1" fill="#595959" font-family="Liberation Sans, sans-serif">5</text><rect x="35.8" y="157.60" width="194.37" height="2.38" fill="#fdbf2d"/><rect x="35.8" y="160.62" width="245.40" height="2.38" fill="#a5a5a5"/><rect x="35.8" y="163.64" width="169.79" height="2.38" fill="#ed7d31"/><rect x="35.8" y="166.66" width="154.48" height="2.38" fill="#4472c4"/><text x="23.8" y="167.6" text-anchor="end" font-size="12.1" fill="#595959" font-family="Liberation Sans, sans-serif">6</text><rect x="35.8" y="140.93" width="184.49" height="2.38" fill="#fdbf2d"/><rect x="35.8" y="143.95" width="198.55" height="2.38" fill="#a5a5a5"/><rect x="35.8" y="146.97" width="199.01" height="2.38" fill="#ed7d31"/><rect x="35.8" y="149.99" width="89.21" height="2.38" fill="#4472c4"/><text x="23.8" y="151.0" text-anchor="end" font-size="12.1" fill="#595959" font-family="Liberation Sans, sans-serif">7</text><rect x="35.8" y="124.27" width="69.58" height="2.38" fill="#fdbf2d"/><rect x="35.8" y="127.29" width="312.20" height="2.38" fill="#a5a5a5"/><rect x="35.8" y="130.31" width="232.41" height="2.38" fill="#ed7d31"/><rect x="35.8" y="133.33" width="302.09" height="2.38" fill="#4472c4"/><text x="23.8" y="134.3" text-anchor="end" font-size="12.1" fill="#595959" font-family="Liberation Sans, sans-serif">8</text><rect x="35.8" y="107.60" width="176.28" height="2.38" fill="#fdbf2d"/><rect x="35.8" y="110.62" width="242.16" height="2.38" fill="#a5a5a5"/><rect x="35.8" y="113.64" width="179.07" height="2.38" fill="#ed7d31"/><rect x="35.8" y="116.66" width="138.24" height="2.38" fill="#4472c4"/><text x="23.8" y="117.6" text-anchor="end" font-size="12.1" fill="#595959" font-family="Liberation Sans, sans-serif">9</text><rect x="35.8" y="90.93" width="291.79" height="2.38" fill="#fdbf2d"/><rect x="35.8" y="93.95" width="162.37" height="2.38" fill="#a5a5a5"/><rect x="35.8" y="96.97" width="294.11" height="2.38" fill="#ed7d31"/><rect x="35.8" y="99.99" width="201.05" height="2.38" fill="#4472c4"/><text x="23.8" y="101.0" text-anchor="end" font-size="12.1" fill="#595959" font-family="Liberation Sans, sans-serif">10</text><rect x="35.8" y="74.27" width="267.21" height="2.38" fill="#fdbf2d"/><rect x="35.8" y="77.29" width="411.94" height="2.38" fill="#a5a5a5"/><rect x="35.8" y="80.31" width="45.04" height="2.38" fill="#ed7d31"/><rect x="35.8" y="83.33" width="59.84" height="2.38" fill="#4472c4"/><text x="23.8" y="84.3" text-anchor="end" font-size="12.1" fill="#595959" font-family="Liberation Sans, sans-serif">11</text><rect x="35.8" y="57.60" width="173.31" height="2.38" fill="#fdbf2d"/><rect x="35.8" y="60.62" width="149.84" height="2.38" fill="#a5a5a5"/><rect x="35.8" y="63.64" width="257.70" height="2.38" fill="#ed7d31"/><rect x="35.8" y="66.66" width="242.16" height="2.38" fill="#4472c4"/><text x="23.8" y="67.6" text-anchor="end" font-size="12.1" fill="#595959" font-family="Liberation Sans, sans-serif">12</text><rect x="165.5" y="299.4" width="6.6" height="6.6" fill="#fdbf2d"/><text x="175.8" y="307.1" font-size="11.8" fill="#595959" font-family="Liberation Sans, sans-serif">Serie4</text><rect x="222.4" y="299.4" width="6.6" height="6.6" fill="#a5a5a5"/><text x="232.7" y="307.1" font-size="11.8" fill="#595959" font-family="Liberation Sans, sans-serif">Serie3</text><rect x="279.4" y="299.4" width="6.6" height="6.6" fill="#ed7d31"/><text x="289.7" y="307.1" font-size="11.8" fill="#595959" font-family="Liberation Sans, sans-serif">Serie2</text><rect x="336.3" y="299.4" width="6.6" height="6.6" fill="#4472c4"/><text x="346.6" y="307.1" font-size="11.8" fill="#595959" font-family="Liberation Sans, sans-serif">Serie1</text></svg><div style="position:absolute;left:199.7px;top:744.2px;height:26px;line-height:26px;white-space:nowrap;font-size:19.5px;color:#ececec;-webkit-text-stroke:0.3px #ececec;letter-spacing:0.108px;">Barre raggruppate</div><svg style="left:10px;top:806px;overflow:hidden" width="540" height="324" viewBox="0 0 540 324"><rect width="540" height="324" fill="#fff"/><text x="270" y="31.5" text-anchor="middle" font-size="19.3" fill="#595959" font-family="Liberation Sans, sans-serif">Titolo del grafico</text><rect x="69.7" y="54.7" width="454.1" height="1.4" fill="#d9d9d9"/><text x="57" y="59.7" text-anchor="end" font-size="12.1" fill="#595959" font-family="Liberation Sans, sans-serif">€ 100,00</text><rect x="69.7" y="74.7" width="454.1" height="1.4" fill="#d9d9d9"/><text x="57" y="79.7" text-anchor="end" font-size="12.1" fill="#595959" font-family="Liberation Sans, sans-serif">€ 90,00</text><rect x="69.7" y="94.7" width="454.1" height="1.4" fill="#d9d9d9"/><text x="57" y="99.7" text-anchor="end" font-size="12.1" fill="#595959" font-family="Liberation Sans, sans-serif">€ 80,00</text><rect x="69.7" y="114.7" width="454.1" height="1.4" fill="#d9d9d9"/><text x="57" y="119.7" text-anchor="end" font-size="12.1" fill="#595959" font-family="Liberation Sans, sans-serif">€ 70,00</text><rect x="69.7" y="134.7" width="454.1" height="1.4" fill="#d9d9d9"/><text x="57" y="139.7" text-anchor="end" font-size="12.1" fill="#595959" font-family="Liberation Sans, sans-serif">€ 60,00</text><rect x="69.7" y="154.7" width="454.1" height="1.4" fill="#d9d9d9"/><text x="57" y="159.7" text-anchor="end" font-size="12.1" fill="#595959" font-family="Liberation Sans, sans-serif">€ 50,00</text><rect x="69.7" y="174.7" width="454.1" height="1.4" fill="#d9d9d9"/><text x="57" y="179.7" text-anchor="end" font-size="12.1" fill="#595959" font-family="Liberation Sans, sans-serif">€ 40,00</text><rect x="69.7" y="194.7" width="454.1" height="1.4" fill="#d9d9d9"/><text x="57" y="199.7" text-anchor="end" font-size="12.1" fill="#595959" font-family="Liberation Sans, sans-serif">€ 30,00</text><rect x="69.7" y="214.7" width="454.1" height="1.4" fill="#d9d9d9"/><text x="57" y="219.7" text-anchor="end" font-size="12.1" fill="#595959" font-family="Liberation Sans, sans-serif">€ 20,00</text><rect x="69.7" y="234.7" width="454.1" height="1.4" fill="#d9d9d9"/><text x="57" y="239.7" text-anchor="end" font-size="12.1" fill="#595959" font-family="Liberation Sans, sans-serif">€ 10,00</text><rect x="69.7" y="254.7" width="454.1" height="1.4" fill="#d9d9d9"/><text x="57" y="259.7" text-anchor="end" font-size="12.1" fill="#595959" font-family="Liberation Sans, sans-serif">€ 0,00</text><polyline points="88.6,204.9 126.5,225.6 164.3,201.4 202.1,164.4 240.0,207.6 277.8,188.8 315.7,216.9 353.5,125.2 391.4,195.8 429.2,168.7 467.0,229.6 504.9,151.0" fill="none" stroke="#4472c4" stroke-width="2.4" stroke-linejoin="round" stroke-linecap="round"/><polyline points="88.6,93.6 126.5,228.8 164.3,198.8 202.1,179.4 240.0,100.9 277.8,182.2 315.7,169.6 353.5,155.2 391.4,178.2 429.2,128.6 467.0,236.0 504.9,144.3" fill="none" stroke="#ed7d31" stroke-width="2.4" stroke-linejoin="round" stroke-linecap="round"/><polyline points="88.6,243.4 126.5,227.4 164.3,224.4 202.1,244.4 240.0,75.4 277.8,149.6 315.7,169.8 353.5,120.8 391.4,151.0 429.2,185.4 467.0,77.8 504.9,190.8" fill="none" stroke="#a5a5a5" stroke-width="2.4" stroke-linejoin="round" stroke-linecap="round"/><polyline points="88.6,75.4 126.5,99.4 164.3,122.2 202.1,166.4 240.0,161.2 277.8,171.6 315.7,175.9 353.5,225.4 391.4,179.4 429.2,129.6 467.0,140.2 504.9,180.7" fill="none" stroke="#fdbf2d" stroke-width="2.4" stroke-linejoin="round" stroke-linecap="round"/></svg><div style="position:absolute;left:560px;top:8px;width:30px;height:1000px;background:#3c3c3c;border-left:1px solid #4a4a4a;border-right:1px solid #484848;"></div><div style="position:absolute;left:568px;top:14px;width:16px;height:275px;background:#777;border-radius:8px;"></div></div></div>
</div></body></html>
